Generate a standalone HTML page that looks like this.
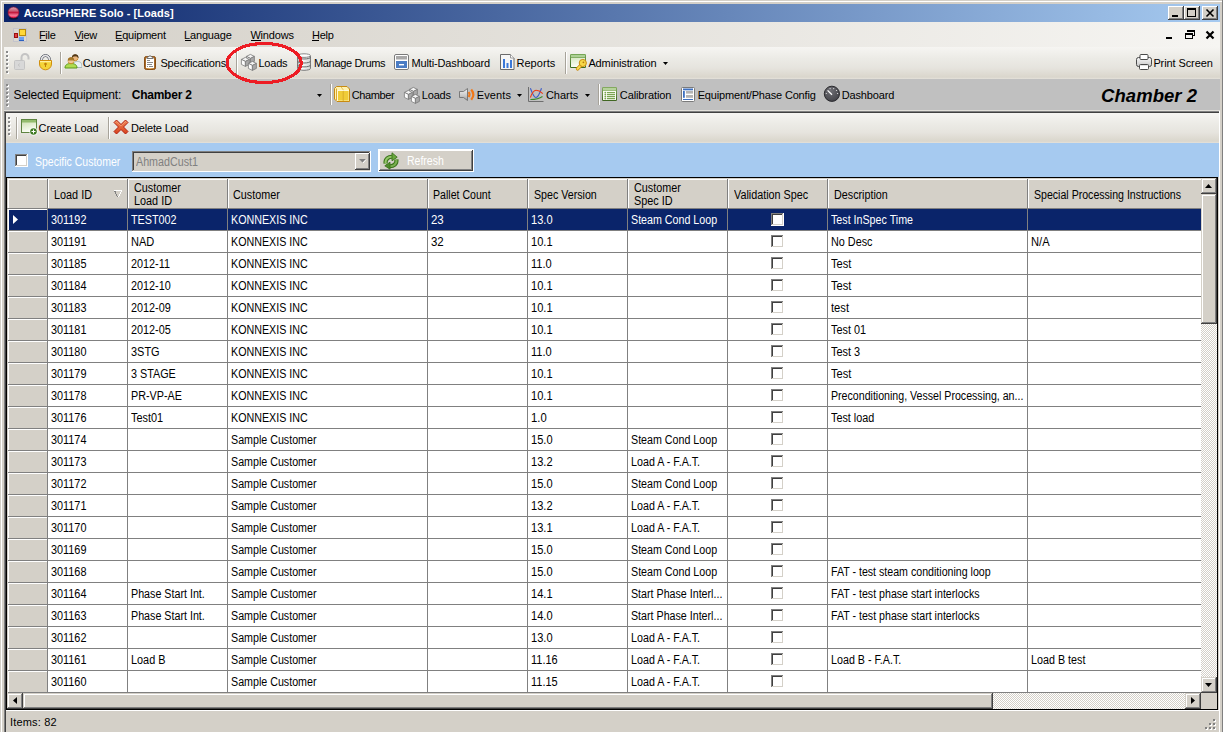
<!DOCTYPE html>
<html><head><meta charset="utf-8"><style>
html,body{margin:0;padding:0;width:1223px;height:732px;overflow:hidden;background:#d4d0c8}
.t{position:absolute;white-space:pre}
</style></head><body>
<div style="position:absolute;left:0px;top:0px;width:1223px;height:732px;background:#d4d0c8;"></div><div style="position:absolute;left:1px;top:1px;width:1221px;height:1px;background:#fff;"></div><div style="position:absolute;left:1px;top:1px;width:1px;height:731px;background:#fff;"></div><div style="position:absolute;left:1222px;top:0px;width:1px;height:732px;background:#808080;"></div><div style="position:absolute;left:4px;top:4px;width:1216px;height:18px;background:linear-gradient(90deg,#0a246a,#a6caf0);"></div><svg style="position:absolute;left:7px;top:6px" width="13" height="14"><defs><linearGradient id="tb" x1="0" y1="0" x2="0" y2="1"><stop offset="0" stop-color="#d8a4b4"/><stop offset=".35" stop-color="#c86078"/><stop offset=".5" stop-color="#c41c40"/><stop offset=".75" stop-color="#f27c98"/><stop offset=".92" stop-color="#ff3466"/><stop offset="1" stop-color="#c0103a"/></linearGradient></defs><ellipse cx="6.5" cy="12.3" rx="4.5" ry="1.2" fill="#000" opacity=".5"/><circle cx="6.5" cy="6.5" r="5.5" fill="url(#tb)" stroke="#900c2a" stroke-width=".6"/></svg><div style="position:absolute;left:1168px;top:6px;width:16px;height:14px;background:#d4d0c8;box-shadow:inset -1px -1px #404040,inset 1px 1px #fff,inset -2px -2px #808080"></div><svg style="position:absolute;left:1168px;top:6px" width="16" height="14"><rect x="4" y="9" width="6" height="2" fill="#000"/></svg><div style="position:absolute;left:1184px;top:6px;width:16px;height:14px;background:#d4d0c8;box-shadow:inset -1px -1px #404040,inset 1px 1px #fff,inset -2px -2px #808080"></div><svg style="position:absolute;left:1184px;top:6px" width="16" height="14"><g fill="#000"><rect x="3" y="2" width="9" height="2"/><rect x="3" y="2" width="1" height="9"/><rect x="11" y="2" width="1" height="9"/><rect x="3" y="10" width="9" height="1"/></g></svg><div style="position:absolute;left:1202px;top:6px;width:16px;height:14px;background:#d4d0c8;box-shadow:inset -1px -1px #404040,inset 1px 1px #fff,inset -2px -2px #808080"></div><svg style="position:absolute;left:1202px;top:6px" width="16" height="14"><path d="M4.5 3.5L11.5 10.5M11.5 3.5L4.5 10.5" stroke="#000" stroke-width="1.6"/></svg><div style="position:absolute;left:4px;top:22px;width:1216px;height:25px;background:linear-gradient(90deg,#d4d0c8,#f6f5f2);"></div><div style="position:absolute;left:40px;top:40px;width:6px;height:1px;background:#000;"></div><div style="position:absolute;left:75px;top:40px;width:8px;height:1px;background:#000;"></div><div style="position:absolute;left:116px;top:40px;width:7px;height:1px;background:#000;"></div><div style="position:absolute;left:185px;top:40px;width:6px;height:1px;background:#000;"></div><div style="position:absolute;left:251px;top:40px;width:10px;height:1px;background:#000;"></div><div style="position:absolute;left:312px;top:40px;width:7px;height:1px;background:#000;"></div><svg style="position:absolute;left:1160px;top:26px" width="60" height="18" shape-rendering="crispEdges"><g fill="#000"><rect x="6" y="11" width="6" height="2"/><rect x="27" y="4" width="8" height="2"/><rect x="34" y="4" width="1" height="6"/><rect x="32" y="9" width="3" height="1"/><rect x="25" y="7" width="8" height="2"/><rect x="25" y="7" width="1" height="6"/><rect x="32" y="7" width="1" height="6"/><rect x="25" y="12" width="8" height="1"/></g><path d="M46.5 5.5L53.5 12.5M53.5 5.5L46.5 12.5" stroke="#000" stroke-width="2.2" shape-rendering="geometricPrecision"/></svg><div style="position:absolute;left:4px;top:47px;width:1216px;height:32px;background:linear-gradient(180deg,#f6f5f2 0%,#ecebe6 35%,#e6e4de 65%,#dad6cc 94%,#e4e1da 100%);"></div><div style="position:absolute;left:7px;top:52px;width:2px;height:2px;background:#fff;"></div><div style="position:absolute;left:6px;top:51px;width:2px;height:2px;background:#8a8a8a;"></div><div style="position:absolute;left:7px;top:56px;width:2px;height:2px;background:#fff;"></div><div style="position:absolute;left:6px;top:55px;width:2px;height:2px;background:#8a8a8a;"></div><div style="position:absolute;left:7px;top:60px;width:2px;height:2px;background:#fff;"></div><div style="position:absolute;left:6px;top:59px;width:2px;height:2px;background:#8a8a8a;"></div><div style="position:absolute;left:7px;top:64px;width:2px;height:2px;background:#fff;"></div><div style="position:absolute;left:6px;top:63px;width:2px;height:2px;background:#8a8a8a;"></div><div style="position:absolute;left:7px;top:68px;width:2px;height:2px;background:#fff;"></div><div style="position:absolute;left:6px;top:67px;width:2px;height:2px;background:#8a8a8a;"></div><div style="position:absolute;left:7px;top:72px;width:2px;height:2px;background:#fff;"></div><div style="position:absolute;left:6px;top:71px;width:2px;height:2px;background:#8a8a8a;"></div><div style="position:absolute;left:60px;top:52px;width:1px;height:22px;background:#a7a39a;"></div><div style="position:absolute;left:61px;top:52px;width:1px;height:22px;background:#fff;"></div><div style="position:absolute;left:236px;top:52px;width:1px;height:22px;background:#a7a39a;"></div><div style="position:absolute;left:237px;top:52px;width:1px;height:22px;background:#fff;"></div><div style="position:absolute;left:565px;top:52px;width:1px;height:22px;background:#a7a39a;"></div><div style="position:absolute;left:566px;top:52px;width:1px;height:22px;background:#fff;"></div><svg style="position:absolute;left:660px;top:60px" width="10" height="6"><path d="M3 2h5l-2.5 3z" fill="#000"/></svg><div style="position:absolute;left:4px;top:79px;width:1216px;height:31px;background:#c0c0c0;"></div><div style="position:absolute;left:7px;top:85px;width:2px;height:2px;background:#fff;"></div><div style="position:absolute;left:6px;top:84px;width:2px;height:2px;background:#8a8a8a;"></div><div style="position:absolute;left:7px;top:89px;width:2px;height:2px;background:#fff;"></div><div style="position:absolute;left:6px;top:88px;width:2px;height:2px;background:#8a8a8a;"></div><div style="position:absolute;left:7px;top:93px;width:2px;height:2px;background:#fff;"></div><div style="position:absolute;left:6px;top:92px;width:2px;height:2px;background:#8a8a8a;"></div><div style="position:absolute;left:7px;top:97px;width:2px;height:2px;background:#fff;"></div><div style="position:absolute;left:6px;top:96px;width:2px;height:2px;background:#8a8a8a;"></div><div style="position:absolute;left:7px;top:101px;width:2px;height:2px;background:#fff;"></div><div style="position:absolute;left:6px;top:100px;width:2px;height:2px;background:#8a8a8a;"></div><div style="position:absolute;left:7px;top:105px;width:2px;height:2px;background:#fff;"></div><div style="position:absolute;left:6px;top:104px;width:2px;height:2px;background:#8a8a8a;"></div><svg style="position:absolute;left:314px;top:92px" width="10" height="6"><path d="M3 2h5l-2.5 3z" fill="#000"/></svg><div style="position:absolute;left:330px;top:84px;width:1px;height:21px;background:#a7a39a;"></div><div style="position:absolute;left:331px;top:84px;width:1px;height:21px;background:#fff;"></div><div style="position:absolute;left:598px;top:84px;width:1px;height:21px;background:#a7a39a;"></div><div style="position:absolute;left:599px;top:84px;width:1px;height:21px;background:#fff;"></div><svg style="position:absolute;left:514px;top:92px" width="10" height="6"><path d="M3 2h5l-2.5 3z" fill="#000"/></svg><svg style="position:absolute;left:582px;top:92px" width="10" height="6"><path d="M3 2h5l-2.5 3z" fill="#000"/></svg><div style="position:absolute;left:4px;top:110px;width:1216px;height:1px;background:#e2e0da;"></div><div style="position:absolute;left:4px;top:111px;width:1215px;height:1px;background:#808080;"></div><div style="position:absolute;left:4px;top:112px;width:1215px;height:1px;background:#404040;"></div><div style="position:absolute;left:4px;top:111px;width:1px;height:621px;background:#808080;"></div><div style="position:absolute;left:5px;top:112px;width:1px;height:620px;background:#404040;"></div><div style="position:absolute;left:1219px;top:111px;width:1px;height:621px;background:#fff;"></div><div style="position:absolute;left:6px;top:113px;width:1213px;height:30px;background:linear-gradient(180deg,#f6f5f2 0%,#ecebe6 35%,#e6e4de 65%,#dad6cc 94%,#e4e1da 100%);"></div><div style="position:absolute;left:9px;top:118px;width:2px;height:2px;background:#fff;"></div><div style="position:absolute;left:8px;top:117px;width:2px;height:2px;background:#8a8a8a;"></div><div style="position:absolute;left:9px;top:122px;width:2px;height:2px;background:#fff;"></div><div style="position:absolute;left:8px;top:121px;width:2px;height:2px;background:#8a8a8a;"></div><div style="position:absolute;left:9px;top:126px;width:2px;height:2px;background:#fff;"></div><div style="position:absolute;left:8px;top:125px;width:2px;height:2px;background:#8a8a8a;"></div><div style="position:absolute;left:9px;top:130px;width:2px;height:2px;background:#fff;"></div><div style="position:absolute;left:8px;top:129px;width:2px;height:2px;background:#8a8a8a;"></div><div style="position:absolute;left:9px;top:134px;width:2px;height:2px;background:#fff;"></div><div style="position:absolute;left:8px;top:133px;width:2px;height:2px;background:#8a8a8a;"></div><div style="position:absolute;left:16px;top:117px;width:1px;height:22px;background:#a7a39a;"></div><div style="position:absolute;left:17px;top:117px;width:1px;height:22px;background:#fff;"></div><div style="position:absolute;left:108px;top:117px;width:1px;height:22px;background:#a7a39a;"></div><div style="position:absolute;left:109px;top:117px;width:1px;height:22px;background:#fff;"></div><div style="position:absolute;left:6px;top:143px;width:1213px;height:34px;background:#a6caf0;"></div><svg style="position:absolute;left:15px;top:154px" width="13" height="13" shape-rendering="crispEdges"><rect width="13" height="13" fill="#fff"/><path d="M0 0.5H12M0.5 0V12" stroke="#808080"/><path d="M1 1.5H11M1.5 1V11" stroke="#404040"/><path d="M12.5 0V13M0 12.5H13" stroke="#fff"/><path d="M11.5 1V12M1 11.5H12" stroke="#d4d0c8"/></svg><svg style="position:absolute;left:132px;top:151px" width="239" height="21" shape-rendering="crispEdges"><rect width="239" height="21" fill="#d4d0c8"/><path d="M0 0.5H238M0.5 0V20" stroke="#808080"/><path d="M1 1.5H237M1.5 1V19" stroke="#404040"/><path d="M238.5 0V21M0 20.5H239" stroke="#fff"/><g transform="translate(223 2)"><rect width="15" height="17" fill="#d4d0c8"/><path d="M0 0.5H14M0.5 0V16" stroke="#fff"/><path d="M14.5 0V17M0 16.5H15" stroke="#404040"/><path d="M13.5 1V16M1 15.5H14" stroke="#808080"/><path d="M4 6h7l-3.5 3.5z" fill="#808080" shape-rendering="geometricPrecision"/><path d="M11 6.5L8 10" stroke="#fff" stroke-width="1" shape-rendering="geometricPrecision"/></g></svg><svg style="position:absolute;left:378px;top:149px" width="96" height="23" shape-rendering="crispEdges"><rect width="96" height="23" fill="#fff"/><rect x="1" y="1" width="94" height="21" fill="#d4d0c8"/><path d="M1 1.5H94M1.5 1V21" stroke="#fff"/><path d="M94.5 1V22M1 21.5H95" stroke="#404040"/><path d="M93.5 2V21M2 20.5H94" stroke="#808080"/></svg><div style="position:absolute;left:6px;top:177px;width:1212px;height:533px;background:#000;"></div><div style="position:absolute;left:7px;top:178px;width:1210px;height:531px;background:#fff;"></div><div style="position:absolute;left:7px;top:178px;width:1194px;height:31px;background:#d4d0c8;"></div><div style="position:absolute;left:8px;top:179px;width:1193px;height:1px;background:#fff;"></div><div style="position:absolute;left:7px;top:208px;width:1194px;height:1px;background:#808080;"></div><div style="position:absolute;left:47px;top:179px;width:1px;height:29px;background:#808080;"></div><div style="position:absolute;left:48px;top:179px;width:1px;height:29px;background:#fff;"></div><div style="position:absolute;left:127px;top:179px;width:1px;height:29px;background:#808080;"></div><div style="position:absolute;left:128px;top:179px;width:1px;height:29px;background:#fff;"></div><div style="position:absolute;left:227px;top:179px;width:1px;height:29px;background:#808080;"></div><div style="position:absolute;left:228px;top:179px;width:1px;height:29px;background:#fff;"></div><div style="position:absolute;left:427px;top:179px;width:1px;height:29px;background:#808080;"></div><div style="position:absolute;left:428px;top:179px;width:1px;height:29px;background:#fff;"></div><div style="position:absolute;left:527px;top:179px;width:1px;height:29px;background:#808080;"></div><div style="position:absolute;left:528px;top:179px;width:1px;height:29px;background:#fff;"></div><div style="position:absolute;left:627px;top:179px;width:1px;height:29px;background:#808080;"></div><div style="position:absolute;left:628px;top:179px;width:1px;height:29px;background:#fff;"></div><div style="position:absolute;left:727px;top:179px;width:1px;height:29px;background:#808080;"></div><div style="position:absolute;left:728px;top:179px;width:1px;height:29px;background:#fff;"></div><div style="position:absolute;left:827px;top:179px;width:1px;height:29px;background:#808080;"></div><div style="position:absolute;left:828px;top:179px;width:1px;height:29px;background:#fff;"></div><div style="position:absolute;left:1027px;top:179px;width:1px;height:29px;background:#808080;"></div><div style="position:absolute;left:1028px;top:179px;width:1px;height:29px;background:#fff;"></div><div style="position:absolute;left:8px;top:179px;width:1px;height:29px;background:#fff;"></div><svg style="position:absolute;left:112px;top:188px" width="12" height="12" shape-rendering="crispEdges"><rect x="2" y="2" width="8" height="1" fill="#fff"/><rect x="2" y="3" width="2" height="1" fill="#808080"/><rect x="3" y="4" width="1" height="2" fill="#808080"/><rect x="4" y="6" width="1" height="2" fill="#808080"/><rect x="5" y="8" width="1" height="1" fill="#808080"/><rect x="9" y="3" width="1" height="1" fill="#fff"/><rect x="8" y="4" width="1" height="2" fill="#fff"/><rect x="7" y="6" width="1" height="2" fill="#fff"/><rect x="6" y="8" width="1" height="1" fill="#fff"/></svg><div style="position:absolute;left:7px;top:209px;width:40px;height:22px;background:#d4d0c8;"></div><div style="position:absolute;left:8px;top:209px;width:39px;height:1px;background:#fff;"></div><div style="position:absolute;left:8px;top:209px;width:1px;height:21px;background:#fff;"></div><div style="position:absolute;left:8px;top:230px;width:39px;height:1px;background:#808080;"></div><div style="position:absolute;left:9px;top:210px;width:38px;height:20px;background:#0a246a;"></div><svg style="position:absolute;left:12px;top:215px" width="8" height="10"><path d="M1 0v9l5-4.5z" fill="#fff"/></svg><div style="position:absolute;left:48px;top:209px;width:1153px;height:21px;background:#0a246a;"></div><div style="position:absolute;left:48px;top:230px;width:1153px;height:1px;background:#808080;"></div><div style="position:absolute;left:47px;top:209px;width:1px;height:22px;background:#808080;"></div><div style="position:absolute;left:127px;top:209px;width:1px;height:22px;background:#808080;"></div><div style="position:absolute;left:227px;top:209px;width:1px;height:22px;background:#808080;"></div><div style="position:absolute;left:427px;top:209px;width:1px;height:22px;background:#808080;"></div><div style="position:absolute;left:527px;top:209px;width:1px;height:22px;background:#808080;"></div><div style="position:absolute;left:627px;top:209px;width:1px;height:22px;background:#808080;"></div><div style="position:absolute;left:727px;top:209px;width:1px;height:22px;background:#808080;"></div><div style="position:absolute;left:827px;top:209px;width:1px;height:22px;background:#808080;"></div><div style="position:absolute;left:1027px;top:209px;width:1px;height:22px;background:#808080;"></div><svg style="position:absolute;left:771px;top:213px" width="13" height="13" shape-rendering="crispEdges"><rect width="13" height="13" fill="#fff"/><path d="M0 0.5H12M0.5 0V12" stroke="#808080"/><path d="M1 1.5H11M1.5 1V11" stroke="#404040"/><path d="M12.5 0V13M0 12.5H13" stroke="#fff"/><path d="M11.5 1V12M1 11.5H12" stroke="#d4d0c8"/></svg><div style="position:absolute;left:7px;top:231px;width:40px;height:22px;background:#d4d0c8;"></div><div style="position:absolute;left:8px;top:231px;width:39px;height:1px;background:#fff;"></div><div style="position:absolute;left:8px;top:231px;width:1px;height:21px;background:#fff;"></div><div style="position:absolute;left:8px;top:252px;width:39px;height:1px;background:#808080;"></div><div style="position:absolute;left:48px;top:231px;width:1153px;height:21px;background:#fff;"></div><div style="position:absolute;left:48px;top:252px;width:1153px;height:1px;background:#808080;"></div><div style="position:absolute;left:47px;top:231px;width:1px;height:22px;background:#808080;"></div><div style="position:absolute;left:127px;top:231px;width:1px;height:22px;background:#808080;"></div><div style="position:absolute;left:227px;top:231px;width:1px;height:22px;background:#808080;"></div><div style="position:absolute;left:427px;top:231px;width:1px;height:22px;background:#808080;"></div><div style="position:absolute;left:527px;top:231px;width:1px;height:22px;background:#808080;"></div><div style="position:absolute;left:627px;top:231px;width:1px;height:22px;background:#808080;"></div><div style="position:absolute;left:727px;top:231px;width:1px;height:22px;background:#808080;"></div><div style="position:absolute;left:827px;top:231px;width:1px;height:22px;background:#808080;"></div><div style="position:absolute;left:1027px;top:231px;width:1px;height:22px;background:#808080;"></div><svg style="position:absolute;left:771px;top:235px" width="13" height="13" shape-rendering="crispEdges"><rect width="13" height="13" fill="#fff"/><path d="M0 0.5H12M0.5 0V12" stroke="#808080"/><path d="M1 1.5H11M1.5 1V11" stroke="#404040"/><path d="M12.5 0V13M0 12.5H13" stroke="#fff"/><path d="M11.5 1V12M1 11.5H12" stroke="#d4d0c8"/></svg><div style="position:absolute;left:7px;top:253px;width:40px;height:22px;background:#d4d0c8;"></div><div style="position:absolute;left:8px;top:253px;width:39px;height:1px;background:#fff;"></div><div style="position:absolute;left:8px;top:253px;width:1px;height:21px;background:#fff;"></div><div style="position:absolute;left:8px;top:274px;width:39px;height:1px;background:#808080;"></div><div style="position:absolute;left:48px;top:253px;width:1153px;height:21px;background:#fff;"></div><div style="position:absolute;left:48px;top:274px;width:1153px;height:1px;background:#808080;"></div><div style="position:absolute;left:47px;top:253px;width:1px;height:22px;background:#808080;"></div><div style="position:absolute;left:127px;top:253px;width:1px;height:22px;background:#808080;"></div><div style="position:absolute;left:227px;top:253px;width:1px;height:22px;background:#808080;"></div><div style="position:absolute;left:427px;top:253px;width:1px;height:22px;background:#808080;"></div><div style="position:absolute;left:527px;top:253px;width:1px;height:22px;background:#808080;"></div><div style="position:absolute;left:627px;top:253px;width:1px;height:22px;background:#808080;"></div><div style="position:absolute;left:727px;top:253px;width:1px;height:22px;background:#808080;"></div><div style="position:absolute;left:827px;top:253px;width:1px;height:22px;background:#808080;"></div><div style="position:absolute;left:1027px;top:253px;width:1px;height:22px;background:#808080;"></div><svg style="position:absolute;left:771px;top:257px" width="13" height="13" shape-rendering="crispEdges"><rect width="13" height="13" fill="#fff"/><path d="M0 0.5H12M0.5 0V12" stroke="#808080"/><path d="M1 1.5H11M1.5 1V11" stroke="#404040"/><path d="M12.5 0V13M0 12.5H13" stroke="#fff"/><path d="M11.5 1V12M1 11.5H12" stroke="#d4d0c8"/></svg><div style="position:absolute;left:7px;top:275px;width:40px;height:22px;background:#d4d0c8;"></div><div style="position:absolute;left:8px;top:275px;width:39px;height:1px;background:#fff;"></div><div style="position:absolute;left:8px;top:275px;width:1px;height:21px;background:#fff;"></div><div style="position:absolute;left:8px;top:296px;width:39px;height:1px;background:#808080;"></div><div style="position:absolute;left:48px;top:275px;width:1153px;height:21px;background:#fff;"></div><div style="position:absolute;left:48px;top:296px;width:1153px;height:1px;background:#808080;"></div><div style="position:absolute;left:47px;top:275px;width:1px;height:22px;background:#808080;"></div><div style="position:absolute;left:127px;top:275px;width:1px;height:22px;background:#808080;"></div><div style="position:absolute;left:227px;top:275px;width:1px;height:22px;background:#808080;"></div><div style="position:absolute;left:427px;top:275px;width:1px;height:22px;background:#808080;"></div><div style="position:absolute;left:527px;top:275px;width:1px;height:22px;background:#808080;"></div><div style="position:absolute;left:627px;top:275px;width:1px;height:22px;background:#808080;"></div><div style="position:absolute;left:727px;top:275px;width:1px;height:22px;background:#808080;"></div><div style="position:absolute;left:827px;top:275px;width:1px;height:22px;background:#808080;"></div><div style="position:absolute;left:1027px;top:275px;width:1px;height:22px;background:#808080;"></div><svg style="position:absolute;left:771px;top:279px" width="13" height="13" shape-rendering="crispEdges"><rect width="13" height="13" fill="#fff"/><path d="M0 0.5H12M0.5 0V12" stroke="#808080"/><path d="M1 1.5H11M1.5 1V11" stroke="#404040"/><path d="M12.5 0V13M0 12.5H13" stroke="#fff"/><path d="M11.5 1V12M1 11.5H12" stroke="#d4d0c8"/></svg><div style="position:absolute;left:7px;top:297px;width:40px;height:22px;background:#d4d0c8;"></div><div style="position:absolute;left:8px;top:297px;width:39px;height:1px;background:#fff;"></div><div style="position:absolute;left:8px;top:297px;width:1px;height:21px;background:#fff;"></div><div style="position:absolute;left:8px;top:318px;width:39px;height:1px;background:#808080;"></div><div style="position:absolute;left:48px;top:297px;width:1153px;height:21px;background:#fff;"></div><div style="position:absolute;left:48px;top:318px;width:1153px;height:1px;background:#808080;"></div><div style="position:absolute;left:47px;top:297px;width:1px;height:22px;background:#808080;"></div><div style="position:absolute;left:127px;top:297px;width:1px;height:22px;background:#808080;"></div><div style="position:absolute;left:227px;top:297px;width:1px;height:22px;background:#808080;"></div><div style="position:absolute;left:427px;top:297px;width:1px;height:22px;background:#808080;"></div><div style="position:absolute;left:527px;top:297px;width:1px;height:22px;background:#808080;"></div><div style="position:absolute;left:627px;top:297px;width:1px;height:22px;background:#808080;"></div><div style="position:absolute;left:727px;top:297px;width:1px;height:22px;background:#808080;"></div><div style="position:absolute;left:827px;top:297px;width:1px;height:22px;background:#808080;"></div><div style="position:absolute;left:1027px;top:297px;width:1px;height:22px;background:#808080;"></div><svg style="position:absolute;left:771px;top:301px" width="13" height="13" shape-rendering="crispEdges"><rect width="13" height="13" fill="#fff"/><path d="M0 0.5H12M0.5 0V12" stroke="#808080"/><path d="M1 1.5H11M1.5 1V11" stroke="#404040"/><path d="M12.5 0V13M0 12.5H13" stroke="#fff"/><path d="M11.5 1V12M1 11.5H12" stroke="#d4d0c8"/></svg><div style="position:absolute;left:7px;top:319px;width:40px;height:22px;background:#d4d0c8;"></div><div style="position:absolute;left:8px;top:319px;width:39px;height:1px;background:#fff;"></div><div style="position:absolute;left:8px;top:319px;width:1px;height:21px;background:#fff;"></div><div style="position:absolute;left:8px;top:340px;width:39px;height:1px;background:#808080;"></div><div style="position:absolute;left:48px;top:319px;width:1153px;height:21px;background:#fff;"></div><div style="position:absolute;left:48px;top:340px;width:1153px;height:1px;background:#808080;"></div><div style="position:absolute;left:47px;top:319px;width:1px;height:22px;background:#808080;"></div><div style="position:absolute;left:127px;top:319px;width:1px;height:22px;background:#808080;"></div><div style="position:absolute;left:227px;top:319px;width:1px;height:22px;background:#808080;"></div><div style="position:absolute;left:427px;top:319px;width:1px;height:22px;background:#808080;"></div><div style="position:absolute;left:527px;top:319px;width:1px;height:22px;background:#808080;"></div><div style="position:absolute;left:627px;top:319px;width:1px;height:22px;background:#808080;"></div><div style="position:absolute;left:727px;top:319px;width:1px;height:22px;background:#808080;"></div><div style="position:absolute;left:827px;top:319px;width:1px;height:22px;background:#808080;"></div><div style="position:absolute;left:1027px;top:319px;width:1px;height:22px;background:#808080;"></div><svg style="position:absolute;left:771px;top:323px" width="13" height="13" shape-rendering="crispEdges"><rect width="13" height="13" fill="#fff"/><path d="M0 0.5H12M0.5 0V12" stroke="#808080"/><path d="M1 1.5H11M1.5 1V11" stroke="#404040"/><path d="M12.5 0V13M0 12.5H13" stroke="#fff"/><path d="M11.5 1V12M1 11.5H12" stroke="#d4d0c8"/></svg><div style="position:absolute;left:7px;top:341px;width:40px;height:22px;background:#d4d0c8;"></div><div style="position:absolute;left:8px;top:341px;width:39px;height:1px;background:#fff;"></div><div style="position:absolute;left:8px;top:341px;width:1px;height:21px;background:#fff;"></div><div style="position:absolute;left:8px;top:362px;width:39px;height:1px;background:#808080;"></div><div style="position:absolute;left:48px;top:341px;width:1153px;height:21px;background:#fff;"></div><div style="position:absolute;left:48px;top:362px;width:1153px;height:1px;background:#808080;"></div><div style="position:absolute;left:47px;top:341px;width:1px;height:22px;background:#808080;"></div><div style="position:absolute;left:127px;top:341px;width:1px;height:22px;background:#808080;"></div><div style="position:absolute;left:227px;top:341px;width:1px;height:22px;background:#808080;"></div><div style="position:absolute;left:427px;top:341px;width:1px;height:22px;background:#808080;"></div><div style="position:absolute;left:527px;top:341px;width:1px;height:22px;background:#808080;"></div><div style="position:absolute;left:627px;top:341px;width:1px;height:22px;background:#808080;"></div><div style="position:absolute;left:727px;top:341px;width:1px;height:22px;background:#808080;"></div><div style="position:absolute;left:827px;top:341px;width:1px;height:22px;background:#808080;"></div><div style="position:absolute;left:1027px;top:341px;width:1px;height:22px;background:#808080;"></div><svg style="position:absolute;left:771px;top:345px" width="13" height="13" shape-rendering="crispEdges"><rect width="13" height="13" fill="#fff"/><path d="M0 0.5H12M0.5 0V12" stroke="#808080"/><path d="M1 1.5H11M1.5 1V11" stroke="#404040"/><path d="M12.5 0V13M0 12.5H13" stroke="#fff"/><path d="M11.5 1V12M1 11.5H12" stroke="#d4d0c8"/></svg><div style="position:absolute;left:7px;top:363px;width:40px;height:22px;background:#d4d0c8;"></div><div style="position:absolute;left:8px;top:363px;width:39px;height:1px;background:#fff;"></div><div style="position:absolute;left:8px;top:363px;width:1px;height:21px;background:#fff;"></div><div style="position:absolute;left:8px;top:384px;width:39px;height:1px;background:#808080;"></div><div style="position:absolute;left:48px;top:363px;width:1153px;height:21px;background:#fff;"></div><div style="position:absolute;left:48px;top:384px;width:1153px;height:1px;background:#808080;"></div><div style="position:absolute;left:47px;top:363px;width:1px;height:22px;background:#808080;"></div><div style="position:absolute;left:127px;top:363px;width:1px;height:22px;background:#808080;"></div><div style="position:absolute;left:227px;top:363px;width:1px;height:22px;background:#808080;"></div><div style="position:absolute;left:427px;top:363px;width:1px;height:22px;background:#808080;"></div><div style="position:absolute;left:527px;top:363px;width:1px;height:22px;background:#808080;"></div><div style="position:absolute;left:627px;top:363px;width:1px;height:22px;background:#808080;"></div><div style="position:absolute;left:727px;top:363px;width:1px;height:22px;background:#808080;"></div><div style="position:absolute;left:827px;top:363px;width:1px;height:22px;background:#808080;"></div><div style="position:absolute;left:1027px;top:363px;width:1px;height:22px;background:#808080;"></div><svg style="position:absolute;left:771px;top:367px" width="13" height="13" shape-rendering="crispEdges"><rect width="13" height="13" fill="#fff"/><path d="M0 0.5H12M0.5 0V12" stroke="#808080"/><path d="M1 1.5H11M1.5 1V11" stroke="#404040"/><path d="M12.5 0V13M0 12.5H13" stroke="#fff"/><path d="M11.5 1V12M1 11.5H12" stroke="#d4d0c8"/></svg><div style="position:absolute;left:7px;top:385px;width:40px;height:22px;background:#d4d0c8;"></div><div style="position:absolute;left:8px;top:385px;width:39px;height:1px;background:#fff;"></div><div style="position:absolute;left:8px;top:385px;width:1px;height:21px;background:#fff;"></div><div style="position:absolute;left:8px;top:406px;width:39px;height:1px;background:#808080;"></div><div style="position:absolute;left:48px;top:385px;width:1153px;height:21px;background:#fff;"></div><div style="position:absolute;left:48px;top:406px;width:1153px;height:1px;background:#808080;"></div><div style="position:absolute;left:47px;top:385px;width:1px;height:22px;background:#808080;"></div><div style="position:absolute;left:127px;top:385px;width:1px;height:22px;background:#808080;"></div><div style="position:absolute;left:227px;top:385px;width:1px;height:22px;background:#808080;"></div><div style="position:absolute;left:427px;top:385px;width:1px;height:22px;background:#808080;"></div><div style="position:absolute;left:527px;top:385px;width:1px;height:22px;background:#808080;"></div><div style="position:absolute;left:627px;top:385px;width:1px;height:22px;background:#808080;"></div><div style="position:absolute;left:727px;top:385px;width:1px;height:22px;background:#808080;"></div><div style="position:absolute;left:827px;top:385px;width:1px;height:22px;background:#808080;"></div><div style="position:absolute;left:1027px;top:385px;width:1px;height:22px;background:#808080;"></div><svg style="position:absolute;left:771px;top:389px" width="13" height="13" shape-rendering="crispEdges"><rect width="13" height="13" fill="#fff"/><path d="M0 0.5H12M0.5 0V12" stroke="#808080"/><path d="M1 1.5H11M1.5 1V11" stroke="#404040"/><path d="M12.5 0V13M0 12.5H13" stroke="#fff"/><path d="M11.5 1V12M1 11.5H12" stroke="#d4d0c8"/></svg><div style="position:absolute;left:7px;top:407px;width:40px;height:22px;background:#d4d0c8;"></div><div style="position:absolute;left:8px;top:407px;width:39px;height:1px;background:#fff;"></div><div style="position:absolute;left:8px;top:407px;width:1px;height:21px;background:#fff;"></div><div style="position:absolute;left:8px;top:428px;width:39px;height:1px;background:#808080;"></div><div style="position:absolute;left:48px;top:407px;width:1153px;height:21px;background:#fff;"></div><div style="position:absolute;left:48px;top:428px;width:1153px;height:1px;background:#808080;"></div><div style="position:absolute;left:47px;top:407px;width:1px;height:22px;background:#808080;"></div><div style="position:absolute;left:127px;top:407px;width:1px;height:22px;background:#808080;"></div><div style="position:absolute;left:227px;top:407px;width:1px;height:22px;background:#808080;"></div><div style="position:absolute;left:427px;top:407px;width:1px;height:22px;background:#808080;"></div><div style="position:absolute;left:527px;top:407px;width:1px;height:22px;background:#808080;"></div><div style="position:absolute;left:627px;top:407px;width:1px;height:22px;background:#808080;"></div><div style="position:absolute;left:727px;top:407px;width:1px;height:22px;background:#808080;"></div><div style="position:absolute;left:827px;top:407px;width:1px;height:22px;background:#808080;"></div><div style="position:absolute;left:1027px;top:407px;width:1px;height:22px;background:#808080;"></div><svg style="position:absolute;left:771px;top:411px" width="13" height="13" shape-rendering="crispEdges"><rect width="13" height="13" fill="#fff"/><path d="M0 0.5H12M0.5 0V12" stroke="#808080"/><path d="M1 1.5H11M1.5 1V11" stroke="#404040"/><path d="M12.5 0V13M0 12.5H13" stroke="#fff"/><path d="M11.5 1V12M1 11.5H12" stroke="#d4d0c8"/></svg><div style="position:absolute;left:7px;top:429px;width:40px;height:22px;background:#d4d0c8;"></div><div style="position:absolute;left:8px;top:429px;width:39px;height:1px;background:#fff;"></div><div style="position:absolute;left:8px;top:429px;width:1px;height:21px;background:#fff;"></div><div style="position:absolute;left:8px;top:450px;width:39px;height:1px;background:#808080;"></div><div style="position:absolute;left:48px;top:429px;width:1153px;height:21px;background:#fff;"></div><div style="position:absolute;left:48px;top:450px;width:1153px;height:1px;background:#808080;"></div><div style="position:absolute;left:47px;top:429px;width:1px;height:22px;background:#808080;"></div><div style="position:absolute;left:127px;top:429px;width:1px;height:22px;background:#808080;"></div><div style="position:absolute;left:227px;top:429px;width:1px;height:22px;background:#808080;"></div><div style="position:absolute;left:427px;top:429px;width:1px;height:22px;background:#808080;"></div><div style="position:absolute;left:527px;top:429px;width:1px;height:22px;background:#808080;"></div><div style="position:absolute;left:627px;top:429px;width:1px;height:22px;background:#808080;"></div><div style="position:absolute;left:727px;top:429px;width:1px;height:22px;background:#808080;"></div><div style="position:absolute;left:827px;top:429px;width:1px;height:22px;background:#808080;"></div><div style="position:absolute;left:1027px;top:429px;width:1px;height:22px;background:#808080;"></div><svg style="position:absolute;left:771px;top:433px" width="13" height="13" shape-rendering="crispEdges"><rect width="13" height="13" fill="#fff"/><path d="M0 0.5H12M0.5 0V12" stroke="#808080"/><path d="M1 1.5H11M1.5 1V11" stroke="#404040"/><path d="M12.5 0V13M0 12.5H13" stroke="#fff"/><path d="M11.5 1V12M1 11.5H12" stroke="#d4d0c8"/></svg><div style="position:absolute;left:7px;top:451px;width:40px;height:22px;background:#d4d0c8;"></div><div style="position:absolute;left:8px;top:451px;width:39px;height:1px;background:#fff;"></div><div style="position:absolute;left:8px;top:451px;width:1px;height:21px;background:#fff;"></div><div style="position:absolute;left:8px;top:472px;width:39px;height:1px;background:#808080;"></div><div style="position:absolute;left:48px;top:451px;width:1153px;height:21px;background:#fff;"></div><div style="position:absolute;left:48px;top:472px;width:1153px;height:1px;background:#808080;"></div><div style="position:absolute;left:47px;top:451px;width:1px;height:22px;background:#808080;"></div><div style="position:absolute;left:127px;top:451px;width:1px;height:22px;background:#808080;"></div><div style="position:absolute;left:227px;top:451px;width:1px;height:22px;background:#808080;"></div><div style="position:absolute;left:427px;top:451px;width:1px;height:22px;background:#808080;"></div><div style="position:absolute;left:527px;top:451px;width:1px;height:22px;background:#808080;"></div><div style="position:absolute;left:627px;top:451px;width:1px;height:22px;background:#808080;"></div><div style="position:absolute;left:727px;top:451px;width:1px;height:22px;background:#808080;"></div><div style="position:absolute;left:827px;top:451px;width:1px;height:22px;background:#808080;"></div><div style="position:absolute;left:1027px;top:451px;width:1px;height:22px;background:#808080;"></div><svg style="position:absolute;left:771px;top:455px" width="13" height="13" shape-rendering="crispEdges"><rect width="13" height="13" fill="#fff"/><path d="M0 0.5H12M0.5 0V12" stroke="#808080"/><path d="M1 1.5H11M1.5 1V11" stroke="#404040"/><path d="M12.5 0V13M0 12.5H13" stroke="#fff"/><path d="M11.5 1V12M1 11.5H12" stroke="#d4d0c8"/></svg><div style="position:absolute;left:7px;top:473px;width:40px;height:22px;background:#d4d0c8;"></div><div style="position:absolute;left:8px;top:473px;width:39px;height:1px;background:#fff;"></div><div style="position:absolute;left:8px;top:473px;width:1px;height:21px;background:#fff;"></div><div style="position:absolute;left:8px;top:494px;width:39px;height:1px;background:#808080;"></div><div style="position:absolute;left:48px;top:473px;width:1153px;height:21px;background:#fff;"></div><div style="position:absolute;left:48px;top:494px;width:1153px;height:1px;background:#808080;"></div><div style="position:absolute;left:47px;top:473px;width:1px;height:22px;background:#808080;"></div><div style="position:absolute;left:127px;top:473px;width:1px;height:22px;background:#808080;"></div><div style="position:absolute;left:227px;top:473px;width:1px;height:22px;background:#808080;"></div><div style="position:absolute;left:427px;top:473px;width:1px;height:22px;background:#808080;"></div><div style="position:absolute;left:527px;top:473px;width:1px;height:22px;background:#808080;"></div><div style="position:absolute;left:627px;top:473px;width:1px;height:22px;background:#808080;"></div><div style="position:absolute;left:727px;top:473px;width:1px;height:22px;background:#808080;"></div><div style="position:absolute;left:827px;top:473px;width:1px;height:22px;background:#808080;"></div><div style="position:absolute;left:1027px;top:473px;width:1px;height:22px;background:#808080;"></div><svg style="position:absolute;left:771px;top:477px" width="13" height="13" shape-rendering="crispEdges"><rect width="13" height="13" fill="#fff"/><path d="M0 0.5H12M0.5 0V12" stroke="#808080"/><path d="M1 1.5H11M1.5 1V11" stroke="#404040"/><path d="M12.5 0V13M0 12.5H13" stroke="#fff"/><path d="M11.5 1V12M1 11.5H12" stroke="#d4d0c8"/></svg><div style="position:absolute;left:7px;top:495px;width:40px;height:22px;background:#d4d0c8;"></div><div style="position:absolute;left:8px;top:495px;width:39px;height:1px;background:#fff;"></div><div style="position:absolute;left:8px;top:495px;width:1px;height:21px;background:#fff;"></div><div style="position:absolute;left:8px;top:516px;width:39px;height:1px;background:#808080;"></div><div style="position:absolute;left:48px;top:495px;width:1153px;height:21px;background:#fff;"></div><div style="position:absolute;left:48px;top:516px;width:1153px;height:1px;background:#808080;"></div><div style="position:absolute;left:47px;top:495px;width:1px;height:22px;background:#808080;"></div><div style="position:absolute;left:127px;top:495px;width:1px;height:22px;background:#808080;"></div><div style="position:absolute;left:227px;top:495px;width:1px;height:22px;background:#808080;"></div><div style="position:absolute;left:427px;top:495px;width:1px;height:22px;background:#808080;"></div><div style="position:absolute;left:527px;top:495px;width:1px;height:22px;background:#808080;"></div><div style="position:absolute;left:627px;top:495px;width:1px;height:22px;background:#808080;"></div><div style="position:absolute;left:727px;top:495px;width:1px;height:22px;background:#808080;"></div><div style="position:absolute;left:827px;top:495px;width:1px;height:22px;background:#808080;"></div><div style="position:absolute;left:1027px;top:495px;width:1px;height:22px;background:#808080;"></div><svg style="position:absolute;left:771px;top:499px" width="13" height="13" shape-rendering="crispEdges"><rect width="13" height="13" fill="#fff"/><path d="M0 0.5H12M0.5 0V12" stroke="#808080"/><path d="M1 1.5H11M1.5 1V11" stroke="#404040"/><path d="M12.5 0V13M0 12.5H13" stroke="#fff"/><path d="M11.5 1V12M1 11.5H12" stroke="#d4d0c8"/></svg><div style="position:absolute;left:7px;top:517px;width:40px;height:22px;background:#d4d0c8;"></div><div style="position:absolute;left:8px;top:517px;width:39px;height:1px;background:#fff;"></div><div style="position:absolute;left:8px;top:517px;width:1px;height:21px;background:#fff;"></div><div style="position:absolute;left:8px;top:538px;width:39px;height:1px;background:#808080;"></div><div style="position:absolute;left:48px;top:517px;width:1153px;height:21px;background:#fff;"></div><div style="position:absolute;left:48px;top:538px;width:1153px;height:1px;background:#808080;"></div><div style="position:absolute;left:47px;top:517px;width:1px;height:22px;background:#808080;"></div><div style="position:absolute;left:127px;top:517px;width:1px;height:22px;background:#808080;"></div><div style="position:absolute;left:227px;top:517px;width:1px;height:22px;background:#808080;"></div><div style="position:absolute;left:427px;top:517px;width:1px;height:22px;background:#808080;"></div><div style="position:absolute;left:527px;top:517px;width:1px;height:22px;background:#808080;"></div><div style="position:absolute;left:627px;top:517px;width:1px;height:22px;background:#808080;"></div><div style="position:absolute;left:727px;top:517px;width:1px;height:22px;background:#808080;"></div><div style="position:absolute;left:827px;top:517px;width:1px;height:22px;background:#808080;"></div><div style="position:absolute;left:1027px;top:517px;width:1px;height:22px;background:#808080;"></div><svg style="position:absolute;left:771px;top:521px" width="13" height="13" shape-rendering="crispEdges"><rect width="13" height="13" fill="#fff"/><path d="M0 0.5H12M0.5 0V12" stroke="#808080"/><path d="M1 1.5H11M1.5 1V11" stroke="#404040"/><path d="M12.5 0V13M0 12.5H13" stroke="#fff"/><path d="M11.5 1V12M1 11.5H12" stroke="#d4d0c8"/></svg><div style="position:absolute;left:7px;top:539px;width:40px;height:22px;background:#d4d0c8;"></div><div style="position:absolute;left:8px;top:539px;width:39px;height:1px;background:#fff;"></div><div style="position:absolute;left:8px;top:539px;width:1px;height:21px;background:#fff;"></div><div style="position:absolute;left:8px;top:560px;width:39px;height:1px;background:#808080;"></div><div style="position:absolute;left:48px;top:539px;width:1153px;height:21px;background:#fff;"></div><div style="position:absolute;left:48px;top:560px;width:1153px;height:1px;background:#808080;"></div><div style="position:absolute;left:47px;top:539px;width:1px;height:22px;background:#808080;"></div><div style="position:absolute;left:127px;top:539px;width:1px;height:22px;background:#808080;"></div><div style="position:absolute;left:227px;top:539px;width:1px;height:22px;background:#808080;"></div><div style="position:absolute;left:427px;top:539px;width:1px;height:22px;background:#808080;"></div><div style="position:absolute;left:527px;top:539px;width:1px;height:22px;background:#808080;"></div><div style="position:absolute;left:627px;top:539px;width:1px;height:22px;background:#808080;"></div><div style="position:absolute;left:727px;top:539px;width:1px;height:22px;background:#808080;"></div><div style="position:absolute;left:827px;top:539px;width:1px;height:22px;background:#808080;"></div><div style="position:absolute;left:1027px;top:539px;width:1px;height:22px;background:#808080;"></div><svg style="position:absolute;left:771px;top:543px" width="13" height="13" shape-rendering="crispEdges"><rect width="13" height="13" fill="#fff"/><path d="M0 0.5H12M0.5 0V12" stroke="#808080"/><path d="M1 1.5H11M1.5 1V11" stroke="#404040"/><path d="M12.5 0V13M0 12.5H13" stroke="#fff"/><path d="M11.5 1V12M1 11.5H12" stroke="#d4d0c8"/></svg><div style="position:absolute;left:7px;top:561px;width:40px;height:22px;background:#d4d0c8;"></div><div style="position:absolute;left:8px;top:561px;width:39px;height:1px;background:#fff;"></div><div style="position:absolute;left:8px;top:561px;width:1px;height:21px;background:#fff;"></div><div style="position:absolute;left:8px;top:582px;width:39px;height:1px;background:#808080;"></div><div style="position:absolute;left:48px;top:561px;width:1153px;height:21px;background:#fff;"></div><div style="position:absolute;left:48px;top:582px;width:1153px;height:1px;background:#808080;"></div><div style="position:absolute;left:47px;top:561px;width:1px;height:22px;background:#808080;"></div><div style="position:absolute;left:127px;top:561px;width:1px;height:22px;background:#808080;"></div><div style="position:absolute;left:227px;top:561px;width:1px;height:22px;background:#808080;"></div><div style="position:absolute;left:427px;top:561px;width:1px;height:22px;background:#808080;"></div><div style="position:absolute;left:527px;top:561px;width:1px;height:22px;background:#808080;"></div><div style="position:absolute;left:627px;top:561px;width:1px;height:22px;background:#808080;"></div><div style="position:absolute;left:727px;top:561px;width:1px;height:22px;background:#808080;"></div><div style="position:absolute;left:827px;top:561px;width:1px;height:22px;background:#808080;"></div><div style="position:absolute;left:1027px;top:561px;width:1px;height:22px;background:#808080;"></div><svg style="position:absolute;left:771px;top:565px" width="13" height="13" shape-rendering="crispEdges"><rect width="13" height="13" fill="#fff"/><path d="M0 0.5H12M0.5 0V12" stroke="#808080"/><path d="M1 1.5H11M1.5 1V11" stroke="#404040"/><path d="M12.5 0V13M0 12.5H13" stroke="#fff"/><path d="M11.5 1V12M1 11.5H12" stroke="#d4d0c8"/></svg><div style="position:absolute;left:7px;top:583px;width:40px;height:22px;background:#d4d0c8;"></div><div style="position:absolute;left:8px;top:583px;width:39px;height:1px;background:#fff;"></div><div style="position:absolute;left:8px;top:583px;width:1px;height:21px;background:#fff;"></div><div style="position:absolute;left:8px;top:604px;width:39px;height:1px;background:#808080;"></div><div style="position:absolute;left:48px;top:583px;width:1153px;height:21px;background:#fff;"></div><div style="position:absolute;left:48px;top:604px;width:1153px;height:1px;background:#808080;"></div><div style="position:absolute;left:47px;top:583px;width:1px;height:22px;background:#808080;"></div><div style="position:absolute;left:127px;top:583px;width:1px;height:22px;background:#808080;"></div><div style="position:absolute;left:227px;top:583px;width:1px;height:22px;background:#808080;"></div><div style="position:absolute;left:427px;top:583px;width:1px;height:22px;background:#808080;"></div><div style="position:absolute;left:527px;top:583px;width:1px;height:22px;background:#808080;"></div><div style="position:absolute;left:627px;top:583px;width:1px;height:22px;background:#808080;"></div><div style="position:absolute;left:727px;top:583px;width:1px;height:22px;background:#808080;"></div><div style="position:absolute;left:827px;top:583px;width:1px;height:22px;background:#808080;"></div><div style="position:absolute;left:1027px;top:583px;width:1px;height:22px;background:#808080;"></div><svg style="position:absolute;left:771px;top:587px" width="13" height="13" shape-rendering="crispEdges"><rect width="13" height="13" fill="#fff"/><path d="M0 0.5H12M0.5 0V12" stroke="#808080"/><path d="M1 1.5H11M1.5 1V11" stroke="#404040"/><path d="M12.5 0V13M0 12.5H13" stroke="#fff"/><path d="M11.5 1V12M1 11.5H12" stroke="#d4d0c8"/></svg><div style="position:absolute;left:7px;top:605px;width:40px;height:22px;background:#d4d0c8;"></div><div style="position:absolute;left:8px;top:605px;width:39px;height:1px;background:#fff;"></div><div style="position:absolute;left:8px;top:605px;width:1px;height:21px;background:#fff;"></div><div style="position:absolute;left:8px;top:626px;width:39px;height:1px;background:#808080;"></div><div style="position:absolute;left:48px;top:605px;width:1153px;height:21px;background:#fff;"></div><div style="position:absolute;left:48px;top:626px;width:1153px;height:1px;background:#808080;"></div><div style="position:absolute;left:47px;top:605px;width:1px;height:22px;background:#808080;"></div><div style="position:absolute;left:127px;top:605px;width:1px;height:22px;background:#808080;"></div><div style="position:absolute;left:227px;top:605px;width:1px;height:22px;background:#808080;"></div><div style="position:absolute;left:427px;top:605px;width:1px;height:22px;background:#808080;"></div><div style="position:absolute;left:527px;top:605px;width:1px;height:22px;background:#808080;"></div><div style="position:absolute;left:627px;top:605px;width:1px;height:22px;background:#808080;"></div><div style="position:absolute;left:727px;top:605px;width:1px;height:22px;background:#808080;"></div><div style="position:absolute;left:827px;top:605px;width:1px;height:22px;background:#808080;"></div><div style="position:absolute;left:1027px;top:605px;width:1px;height:22px;background:#808080;"></div><svg style="position:absolute;left:771px;top:609px" width="13" height="13" shape-rendering="crispEdges"><rect width="13" height="13" fill="#fff"/><path d="M0 0.5H12M0.5 0V12" stroke="#808080"/><path d="M1 1.5H11M1.5 1V11" stroke="#404040"/><path d="M12.5 0V13M0 12.5H13" stroke="#fff"/><path d="M11.5 1V12M1 11.5H12" stroke="#d4d0c8"/></svg><div style="position:absolute;left:7px;top:627px;width:40px;height:22px;background:#d4d0c8;"></div><div style="position:absolute;left:8px;top:627px;width:39px;height:1px;background:#fff;"></div><div style="position:absolute;left:8px;top:627px;width:1px;height:21px;background:#fff;"></div><div style="position:absolute;left:8px;top:648px;width:39px;height:1px;background:#808080;"></div><div style="position:absolute;left:48px;top:627px;width:1153px;height:21px;background:#fff;"></div><div style="position:absolute;left:48px;top:648px;width:1153px;height:1px;background:#808080;"></div><div style="position:absolute;left:47px;top:627px;width:1px;height:22px;background:#808080;"></div><div style="position:absolute;left:127px;top:627px;width:1px;height:22px;background:#808080;"></div><div style="position:absolute;left:227px;top:627px;width:1px;height:22px;background:#808080;"></div><div style="position:absolute;left:427px;top:627px;width:1px;height:22px;background:#808080;"></div><div style="position:absolute;left:527px;top:627px;width:1px;height:22px;background:#808080;"></div><div style="position:absolute;left:627px;top:627px;width:1px;height:22px;background:#808080;"></div><div style="position:absolute;left:727px;top:627px;width:1px;height:22px;background:#808080;"></div><div style="position:absolute;left:827px;top:627px;width:1px;height:22px;background:#808080;"></div><div style="position:absolute;left:1027px;top:627px;width:1px;height:22px;background:#808080;"></div><svg style="position:absolute;left:771px;top:631px" width="13" height="13" shape-rendering="crispEdges"><rect width="13" height="13" fill="#fff"/><path d="M0 0.5H12M0.5 0V12" stroke="#808080"/><path d="M1 1.5H11M1.5 1V11" stroke="#404040"/><path d="M12.5 0V13M0 12.5H13" stroke="#fff"/><path d="M11.5 1V12M1 11.5H12" stroke="#d4d0c8"/></svg><div style="position:absolute;left:7px;top:649px;width:40px;height:22px;background:#d4d0c8;"></div><div style="position:absolute;left:8px;top:649px;width:39px;height:1px;background:#fff;"></div><div style="position:absolute;left:8px;top:649px;width:1px;height:21px;background:#fff;"></div><div style="position:absolute;left:8px;top:670px;width:39px;height:1px;background:#808080;"></div><div style="position:absolute;left:48px;top:649px;width:1153px;height:21px;background:#fff;"></div><div style="position:absolute;left:48px;top:670px;width:1153px;height:1px;background:#808080;"></div><div style="position:absolute;left:47px;top:649px;width:1px;height:22px;background:#808080;"></div><div style="position:absolute;left:127px;top:649px;width:1px;height:22px;background:#808080;"></div><div style="position:absolute;left:227px;top:649px;width:1px;height:22px;background:#808080;"></div><div style="position:absolute;left:427px;top:649px;width:1px;height:22px;background:#808080;"></div><div style="position:absolute;left:527px;top:649px;width:1px;height:22px;background:#808080;"></div><div style="position:absolute;left:627px;top:649px;width:1px;height:22px;background:#808080;"></div><div style="position:absolute;left:727px;top:649px;width:1px;height:22px;background:#808080;"></div><div style="position:absolute;left:827px;top:649px;width:1px;height:22px;background:#808080;"></div><div style="position:absolute;left:1027px;top:649px;width:1px;height:22px;background:#808080;"></div><svg style="position:absolute;left:771px;top:653px" width="13" height="13" shape-rendering="crispEdges"><rect width="13" height="13" fill="#fff"/><path d="M0 0.5H12M0.5 0V12" stroke="#808080"/><path d="M1 1.5H11M1.5 1V11" stroke="#404040"/><path d="M12.5 0V13M0 12.5H13" stroke="#fff"/><path d="M11.5 1V12M1 11.5H12" stroke="#d4d0c8"/></svg><div style="position:absolute;left:7px;top:671px;width:40px;height:22px;background:#d4d0c8;"></div><div style="position:absolute;left:8px;top:671px;width:39px;height:1px;background:#fff;"></div><div style="position:absolute;left:8px;top:671px;width:1px;height:21px;background:#fff;"></div><div style="position:absolute;left:8px;top:692px;width:39px;height:1px;background:#808080;"></div><div style="position:absolute;left:48px;top:671px;width:1153px;height:21px;background:#fff;"></div><div style="position:absolute;left:48px;top:692px;width:1153px;height:1px;background:#808080;"></div><div style="position:absolute;left:47px;top:671px;width:1px;height:22px;background:#808080;"></div><div style="position:absolute;left:127px;top:671px;width:1px;height:22px;background:#808080;"></div><div style="position:absolute;left:227px;top:671px;width:1px;height:22px;background:#808080;"></div><div style="position:absolute;left:427px;top:671px;width:1px;height:22px;background:#808080;"></div><div style="position:absolute;left:527px;top:671px;width:1px;height:22px;background:#808080;"></div><div style="position:absolute;left:627px;top:671px;width:1px;height:22px;background:#808080;"></div><div style="position:absolute;left:727px;top:671px;width:1px;height:22px;background:#808080;"></div><div style="position:absolute;left:827px;top:671px;width:1px;height:22px;background:#808080;"></div><div style="position:absolute;left:1027px;top:671px;width:1px;height:22px;background:#808080;"></div><svg style="position:absolute;left:771px;top:675px" width="13" height="13" shape-rendering="crispEdges"><rect width="13" height="13" fill="#fff"/><path d="M0 0.5H12M0.5 0V12" stroke="#808080"/><path d="M1 1.5H11M1.5 1V11" stroke="#404040"/><path d="M12.5 0V13M0 12.5H13" stroke="#fff"/><path d="M11.5 1V12M1 11.5H12" stroke="#d4d0c8"/></svg><div style="position:absolute;left:1201px;top:178px;width:16px;height:515px;background:repeating-conic-gradient(#fff 0 25%,#d4d0c8 0 50%) 0 0/2px 2px;"></div><div style="position:absolute;left:1201px;top:178px;width:16px;height:16px;background:#d4d0c8;box-shadow:inset -1px -1px #404040,inset 1px 1px #d4d0c8,inset -2px -2px #808080,inset 2px 2px #fff"></div><svg style="position:absolute;left:1201px;top:178px" width="16" height="16"><path d="M4 10h7l-3.5-4z" fill="#000"/></svg><div style="position:absolute;left:1201px;top:194px;width:16px;height:130px;background:#d4d0c8;box-shadow:inset -1px -1px #404040,inset 1px 1px #d4d0c8,inset -2px -2px #808080,inset 2px 2px #fff"></div><div style="position:absolute;left:1201px;top:677px;width:16px;height:16px;background:#d4d0c8;box-shadow:inset -1px -1px #404040,inset 1px 1px #d4d0c8,inset -2px -2px #808080,inset 2px 2px #fff"></div><svg style="position:absolute;left:1201px;top:677px" width="16" height="16"><path d="M4 6h7l-3.5 4z" fill="#000"/></svg><div style="position:absolute;left:7px;top:693px;width:1194px;height:16px;background:repeating-conic-gradient(#fff 0 25%,#d4d0c8 0 50%) 0 0/2px 2px;"></div><div style="position:absolute;left:7px;top:693px;width:16px;height:16px;background:#d4d0c8;box-shadow:inset -1px -1px #404040,inset 1px 1px #d4d0c8,inset -2px -2px #808080,inset 2px 2px #fff"></div><svg style="position:absolute;left:7px;top:693px" width="16" height="16"><path d="M10 4v7l-4-3.5z" fill="#000"/></svg><div style="position:absolute;left:23px;top:693px;width:970px;height:16px;background:#d4d0c8;box-shadow:inset -1px -1px #404040,inset 1px 1px #d4d0c8,inset -2px -2px #808080,inset 2px 2px #fff"></div><div style="position:absolute;left:1185px;top:693px;width:16px;height:16px;background:#d4d0c8;box-shadow:inset -1px -1px #404040,inset 1px 1px #d4d0c8,inset -2px -2px #808080,inset 2px 2px #fff"></div><svg style="position:absolute;left:1185px;top:693px" width="16" height="16"><path d="M6 4v7l4-3.5z" fill="#000"/></svg><div style="position:absolute;left:1201px;top:693px;width:16px;height:16px;background:#d4d0c8;"></div><div style="position:absolute;left:6px;top:710px;width:1213px;height:22px;background:#d4d0c8;"></div><div style="position:absolute;left:6px;top:710px;width:1213px;height:1px;background:#fff;"></div><svg style="position:absolute;left:1203px;top:717px" width="14" height="14"><rect x="11" y="3" width="2" height="2" fill="#fff"/><rect x="10" y="2" width="2" height="2" fill="#808080"/><rect x="11" y="7" width="2" height="2" fill="#fff"/><rect x="10" y="6" width="2" height="2" fill="#808080"/><rect x="7" y="7" width="2" height="2" fill="#fff"/><rect x="6" y="6" width="2" height="2" fill="#808080"/><rect x="11" y="11" width="2" height="2" fill="#fff"/><rect x="10" y="10" width="2" height="2" fill="#808080"/><rect x="7" y="11" width="2" height="2" fill="#fff"/><rect x="6" y="10" width="2" height="2" fill="#808080"/><rect x="3" y="11" width="2" height="2" fill="#fff"/><rect x="2" y="10" width="2" height="2" fill="#808080"/></svg>
<svg style="position:absolute;left:12px;top:28px;" width="16" height="15" viewBox="0 0 16 15"><g shape-rendering="crispEdges"><rect x="1.5" y="0.5" width="13" height="13" fill="#dcd8d0" stroke="#c4c4cc"/><path d="M1 6.5h6M6.5 0v14M7 8.5h7" stroke="#c8ccd0"/></g><rect x="7.5" y="1.5" width="6" height="6" fill="#ffd838" stroke="#b88a08"/><rect x="2.5" y="5.5" width="3" height="4" fill="#e04040" stroke="#9a1010"/><rect x="7" y="9" width="5" height="4" fill="#6aa0f0"/><rect x="7" y="12" width="5" height="1" fill="#2a60c0"/></svg><svg style="position:absolute;left:13px;top:53px;" width="18" height="18" viewBox="0 0 18 18"><path d="M8.5 7.5v-3a3.5 3.5 0 0 1 7 0v2" fill="none" stroke="#c4c4c4" stroke-width="2"/><rect x="1.5" y="7.5" width="10" height="9" rx="1" fill="#d8d8d8" stroke="#c4c4c4"/><path d="M7 10.5l-2 1.5 2 1.5" fill="none" stroke="#c0c0c0" stroke-width=".8"/></svg><svg style="position:absolute;left:38px;top:53px;" width="16" height="18" viewBox="0 0 16 18"><path d="M2.5 8V6.5a5 5 0 0 1 10 0V8" fill="none" stroke="#6a6e78" stroke-width="1"/><path d="M4.5 8V6.5a3 3 0 0 1 6 0V8" fill="none" stroke="#6a6e78" stroke-width="1"/><path d="M3.5 8V6.5a4 4 0 0 1 8 0V8" fill="none" stroke="#e8e8ec" stroke-width="1"/><path d="M1.5 7.5h12v3.5a6 5.8 0 0 1-12 0z" fill="#f4d438" stroke="#d08e0c"/><rect x="2" y="8" width="11" height="1.2" fill="#fff0a0"/><circle cx="7.5" cy="11" r="1.3" fill="#c07e0a"/><rect x="7" y="11" width="1" height="3" fill="#c07e0a"/></svg><svg style="position:absolute;left:64px;top:53px;" width="18" height="17" viewBox="0 0 18 17"><path d="M8 14.5c0-4 2-6 5.5-6s4.5 2 4.5 6z" fill="#eaf2f4" stroke="#a8b8bc"/><circle cx="11.2" cy="4.6" r="3" fill="#eab680"/><path d="M8.2 4.6a3 3 0 0 1 6 0c0-1-1-1.6-3-1.6s-3 .6-3 1.6z" fill="#5a4020" stroke="#4a3210" stroke-width=".8"/><path d="M8.3 5.5a3 3 0 0 0 5.8 0" fill="none" stroke="#c88a20" stroke-width=".9"/><path d="M1 15c0-3 2-4.5 6-4.5s6 1.5 6 4.5z" fill="#b0dc50" stroke="#5a9a1a"/><circle cx="7" cy="7.6" r="3" fill="#f0c898"/><path d="M4 7.6a3 3 0 0 1 6 0" fill="#a87a2a" stroke="#98681a" stroke-width=".8"/><path d="M4.1 8.6a3 3 0 0 0 5.8 0" fill="none" stroke="#c8901a" stroke-width=".9"/></svg><svg style="position:absolute;left:144px;top:54px;" width="13" height="17" viewBox="0 0 13 17"><defs><linearGradient id="cb" x1="0" y1="0" x2="1" y2="0"><stop offset="0" stop-color="#9a5a1a"/><stop offset=".5" stop-color="#e8b870"/><stop offset="1" stop-color="#9a5a1a"/></linearGradient></defs><rect x="0.5" y="2.5" width="11" height="13" rx="1.8" fill="url(#cb)" stroke="#8a4e14" stroke-width="1"/><rect x="2" y="4" width="8" height="10" fill="#fff"/><path d="M2.8 4.5h6.4l-1-1.8h-1.2a1 1 0 0 0-2 0h-1.2z" fill="#fff" stroke="#6a6a6a" stroke-width=".9"/><path d="M3 6.5h3M3 8.5h6M3 10.5h5M3 12.5h1M5 12.5h4" stroke="#8a8a8a" stroke-width="1"/></svg><svg style="position:absolute;left:240px;top:53px;" width="18" height="18" viewBox="0 0 18 18"><g transform="translate(6.4 1.4)" stroke="#7a7a7a" stroke-width=".8" stroke-linejoin="miter"><path d="M0 2L4 0 8 2 4 4z" fill="#f4f4f4"/><path d="M0 2L4 4V9L0 7z" fill="#fdfdfd"/><path d="M4 4L8 2V7L4 9z" fill="#a8a8a8"/></g><g transform="translate(1.4 4.4)" stroke="#7a7a7a" stroke-width=".8" stroke-linejoin="miter"><path d="M0 2L4 0 8 2 4 4z" fill="#f4f4f4"/><path d="M0 2L4 4V9L0 7z" fill="#fdfdfd"/><path d="M4 4L8 2V7L4 9z" fill="#a8a8a8"/></g><g transform="translate(8.4 8.4)" stroke="#7a7a7a" stroke-width=".8" stroke-linejoin="miter"><path d="M0 2L4 0 8 2 4 4z" fill="#f4f4f4"/><path d="M0 2L4 4V9L0 7z" fill="#fdfdfd"/><path d="M4 4L8 2V7L4 9z" fill="#a8a8a8"/></g></svg><svg style="position:absolute;left:296px;top:53px;" width="16" height="18" viewBox="0 0 16 18"><defs><linearGradient id="dr" x1="0" y1="0" x2="1" y2="0"><stop offset="0" stop-color="#b8b8b8"/><stop offset=".35" stop-color="#fafafa"/><stop offset="1" stop-color="#d0d0d0"/></linearGradient></defs><path d="M1.5 3v12.5a6.5 1.8 0 0 0 13 0V3" fill="url(#dr)" stroke="#7a7a7a" stroke-width="1"/><path d="M1.5 4.2a6.5 1.8 0 0 0 13 0M1.5 8.2a6.5 1.8 0 0 0 13 0M1.5 12.1a6.5 1.8 0 0 0 13 0" fill="none" stroke="#6a6a6a" stroke-width="1"/><ellipse cx="8" cy="2.6" rx="6.5" ry="1.8" fill="#fdfdfd" stroke="#8a8a8a" stroke-width="1"/></svg><svg style="position:absolute;left:394px;top:54px;" width="15" height="16" viewBox="0 0 15 16"><rect x="0.5" y="0.5" width="14" height="15" rx="1.5" fill="#fff" stroke="#7a7a7a"/><rect x="2" y="2" width="11" height="3.5" fill="#a8a8a8"/><rect x="2" y="7" width="11" height="7" fill="#4a7cc4"/><rect x="5" y="10" width="5" height="1.4" fill="#fff"/></svg><svg style="position:absolute;left:500px;top:54px;" width="15" height="16" viewBox="0 0 15 16"><path d="M0.5 0.5h10l3.5 3.5v11.5h-13.5z" fill="#f6f6f6" stroke="#6a6a6a"/><path d="M10.5 0.5v3.5h3.5" fill="#fff" stroke="#9a9a9a"/><rect x="3" y="5" width="2" height="9" fill="#3a78d8"/><rect x="6.5" y="9" width="2" height="5" fill="#3a78d8"/><rect x="10" y="6" width="2" height="8" fill="#3a78d8"/></svg><svg style="position:absolute;left:569px;top:53px;" width="19" height="19" viewBox="0 0 19 19"><defs><linearGradient id="gw" x1="0" y1="0" x2="0.3" y2="1"><stop offset="0" stop-color="#d8e8c4"/><stop offset="1" stop-color="#fbfdf6"/></linearGradient><linearGradient id="gb" x1="0" y1="0" x2="0" y2="1"><stop offset="0" stop-color="#78a858"/><stop offset="1" stop-color="#3a6a1e"/></linearGradient></defs><rect x="1" y="1" width="16" height="14" rx="1.2" fill="url(#gb)"/><rect x="2" y="2" width="14" height="2.4" fill="#acd094"/><rect x="2" y="5" width="14" height="9" fill="url(#gw)"/><path d="M12 12.3L8.6 15.8" stroke="#c88a10" stroke-width="3.6" stroke-linecap="round"/><path d="M12 12.3L8.6 15.8" stroke="#f8dc50" stroke-width="2" stroke-linecap="round"/><circle cx="13.8" cy="10" r="3.6" fill="#f6d848" stroke="#c88a10" stroke-width="1"/><circle cx="14.4" cy="9.3" r=".9" fill="#b87a10"/></svg><svg style="position:absolute;left:1135px;top:53px;" width="18" height="18" viewBox="0 0 18 18"><defs><linearGradient id="pr" x1="0" y1="0" x2="0" y2="1"><stop offset="0" stop-color="#f8f8f8"/><stop offset=".5" stop-color="#e0e0e0"/><stop offset="1" stop-color="#c8c8c8"/></linearGradient></defs><path d="M3.5 5.5l1.5-2h8l1.5 2z" fill="#404040"/><rect x="1.5" y="4.5" width="15" height="9" rx="2" fill="url(#pr)" stroke="#4a4a4a" stroke-width="1"/><rect x="5" y="1.5" width="8" height="5" rx="1" fill="#fff" stroke="#4a4a4a" stroke-width="1"/><rect x="4.5" y="11.5" width="9" height="5" rx="1" fill="#fff" stroke="#4a4a4a" stroke-width="1"/><rect x="5" y="12" width="8" height="1" fill="#e4e4e4"/></svg><svg style="position:absolute;left:334px;top:86px;" width="17" height="16" viewBox="0 0 17 16"><path d="M0.5 2.5L2.5 0.5H13L15.5 3V15.5H3L0.5 13z" fill="#fff2b0" stroke="#c88a10" stroke-linejoin="round"/><rect x="4" y="4.5" width="10.5" height="10" fill="#f0cc38"/><path d="M3.5 4.5H15M3.5 4.5V15" stroke="#fff8d8" stroke-width="1"/><path d="M2.5 2.5V14" stroke="#d8a020" stroke-width=".9"/><path d="M9.2 5V15" stroke="#d8a828" stroke-width=".9"/><path d="M7 0.8L9.5 4.2" stroke="#e0b850" stroke-width=".9"/></svg><svg style="position:absolute;left:403px;top:86px;" width="18" height="18" viewBox="0 0 18 18"><g transform="translate(6.4 1.4)" stroke="#7a7a7a" stroke-width=".8" stroke-linejoin="miter"><path d="M0 2L4 0 8 2 4 4z" fill="#f4f4f4"/><path d="M0 2L4 4V9L0 7z" fill="#fdfdfd"/><path d="M4 4L8 2V7L4 9z" fill="#a8a8a8"/></g><g transform="translate(1.4 4.4)" stroke="#7a7a7a" stroke-width=".8" stroke-linejoin="miter"><path d="M0 2L4 0 8 2 4 4z" fill="#f4f4f4"/><path d="M0 2L4 4V9L0 7z" fill="#fdfdfd"/><path d="M4 4L8 2V7L4 9z" fill="#a8a8a8"/></g><g transform="translate(8.4 8.4)" stroke="#7a7a7a" stroke-width=".8" stroke-linejoin="miter"><path d="M0 2L4 0 8 2 4 4z" fill="#f4f4f4"/><path d="M0 2L4 4V9L0 7z" fill="#fdfdfd"/><path d="M4 4L8 2V7L4 9z" fill="#a8a8a8"/></g></svg><svg style="position:absolute;left:456px;top:85px;" width="22" height="18" viewBox="0 0 22 18"><defs><linearGradient id="spk" x1="0" y1="0" x2="0" y2="1"><stop offset="0" stop-color="#f4f4f4"/><stop offset=".6" stop-color="#c8c8c8"/><stop offset="1" stop-color="#9a9a9a"/></linearGradient></defs><path d="M3.5 6.5H7.5L11.5 3.5V15.5L7.5 12.5H3.5Z" fill="url(#spk)" stroke="#707070" stroke-width=".9" stroke-linejoin="round"/><path d="M12.6 7Q14.6 9.5 12.6 12" fill="none" stroke="#f07818" stroke-width="2"/><path d="M15.2 4.5Q19.4 9.6 15.2 14.8" fill="none" stroke="#f07818" stroke-width="2.2"/></svg><svg style="position:absolute;left:526px;top:85px;" width="19" height="18" viewBox="0 0 19 18"><path d="M2.5 2v14.5H17.5" fill="none" stroke="#6e6e6e" stroke-width="1"/><path d="M4.4 14.5C9 14.5 13 14 16.5 11.5" fill="none" stroke="#3a8a2a" stroke-width="1.1"/><path d="M4.4 3.2C6.5 9 8 12.5 10 12.5S13.5 9 15.5 3.2" fill="none" stroke="#3a5ac8" stroke-width="1.1"/><path d="M4.4 12.5C6 8 8 5.3 10 5.3S14 6 16.8 8.6" fill="none" stroke="#f03a10" stroke-width="1.1"/></svg><svg style="position:absolute;left:601px;top:86px;" width="17" height="16" viewBox="0 0 17 16"><defs><linearGradient id="cal" x1="0" y1="0" x2="0" y2="1"><stop offset="0" stop-color="#86ac62"/><stop offset="1" stop-color="#3e6420"/></linearGradient></defs><rect x="1" y="1" width="15" height="14" rx="1.2" fill="url(#cal)"/><rect x="2" y="2" width="13" height="2.6" fill="#b6d29c"/><rect x="2" y="5" width="13" height="9" fill="#f8fbf2"/><g fill="#7aa452"><circle cx="4.3" cy="6.6" r=".9"/><circle cx="4.3" cy="8.6" r=".9"/><circle cx="4.3" cy="10.6" r=".9"/><circle cx="4.3" cy="12.6" r=".9"/><rect x="6" y="6" width="8" height="1.2"/><rect x="6" y="8" width="8" height="1.2"/><rect x="6" y="10" width="8" height="1.2"/><rect x="6" y="12" width="8" height="1.2"/></g></svg><svg style="position:absolute;left:680px;top:86px;" width="16" height="17" viewBox="0 0 16 17"><rect x="1.5" y="1.5" width="13" height="14" rx="1" fill="#fff" stroke="#7a7a7a"/><rect x="3" y="2.5" width="10" height="1.8" fill="#3e70c0"/><rect x="3" y="5" width="1.8" height="6.8" fill="#3e70c0"/><rect x="6" y="5" width="7" height="2.6" fill="#b4b4b4"/><rect x="6" y="9" width="7" height="2.8" fill="#b4b4b4"/><rect x="3" y="13" width="10" height="1" fill="#3e70c0"/></svg><svg style="position:absolute;left:823px;top:85px;" width="18" height="18" viewBox="0 0 18 18"><defs><radialGradient id="gg" cx=".4" cy=".3" r=".8"><stop offset="0" stop-color="#707076"/><stop offset="1" stop-color="#3e3e44"/></radialGradient></defs><circle cx="8.9" cy="8.8" r="7.6" fill="url(#gg)" stroke="#2a2a2e" stroke-width="1"/><path d="M4.6 5.4l4.4 4.4" stroke="#fff" stroke-width="1.3"/><g fill="#e8e8e8"><circle cx="7.1" cy="3.6" r=".6"/><circle cx="10.7" cy="3.6" r=".6"/><circle cx="13.5" cy="5.5" r=".6"/><circle cx="3.3" cy="8.5" r=".6"/><circle cx="14.6" cy="8.5" r=".6"/></g></svg><svg style="position:absolute;left:20px;top:118px;" width="18" height="18" viewBox="0 0 18 18"><defs><linearGradient id="gw2" x1="0" y1="0" x2="0.3" y2="1"><stop offset="0" stop-color="#c8dca8"/><stop offset="1" stop-color="#fbfdf6"/></linearGradient></defs><rect x="1.5" y="1.5" width="15" height="13" fill="url(#gw2)" stroke="#5e8440" stroke-width="1"/><rect x="2" y="2" width="14" height="2.5" fill="#94bc6e"/><circle cx="13.5" cy="13.5" r="4" fill="#fff"/><circle cx="13.5" cy="13.5" r="3.3" fill="#3e7a22"/><path d="M13.5 11.5v4M11.5 13.5h4" stroke="#fff" stroke-width="1"/></svg><svg style="position:absolute;left:113px;top:119px;" width="16" height="16" viewBox="0 0 16 16"><defs><linearGradient id="gx" x1="0" y1="0" x2="0" y2="1"><stop offset="0" stop-color="#f08a58"/><stop offset="1" stop-color="#d8401a"/></linearGradient></defs><path d="M1 3.5L3.5 1 8 5.5 12.5 1 15 3.5 10.5 8 15 12.5 12.5 15 8 10.5 3.5 15 1 12.5 5.5 8z" fill="url(#gx)" stroke="#b02010" stroke-width="1" stroke-linejoin="round"/><path d="M2.5 3.5L3.5 2.5 8 7 12.5 2.5 13.5 3.5" stroke="#ffc0a0" stroke-width=".6" fill="none" opacity=".7"/></svg><svg style="position:absolute;left:381px;top:150px;" width="20" height="20" viewBox="0 0 20 20"><g fill="none" stroke-linecap="butt"><path d="M4.6 13.5C4 9 7.5 6.5 11.5 6.8" stroke="#3c741c" stroke-width="4.2"/><path d="M4.6 13.5C4 9 7.5 6.5 11.5 6.8" stroke="#94c868" stroke-width="2"/><path d="M15.4 9.5C16 14 12.5 16.5 8.5 16.2" stroke="#3c741c" stroke-width="4.2"/><path d="M15.4 9.5C16 14 12.5 16.5 8.5 16.2" stroke="#7ab050" stroke-width="2"/></g><path d="M11 2.8L16.2 7.2 11 10.8z" fill="#6aa840" stroke="#3c741c" stroke-width=".9" stroke-linejoin="round"/><path d="M9 12.2L3.8 15.8 9 19.2z" fill="#4e8a2a" stroke="#3c741c" stroke-width=".9" stroke-linejoin="round"/></svg>
<div class="t" style="left:23.70px;top:5.71px;font:normal bold 11px/15px 'Liberation Sans', sans-serif;letter-spacing:0.059px;color:#fff;">AccuSPHERE Solo - [Loads]</div><div class="t" style="left:38.90px;top:27.71px;font:normal normal 11px/15px 'Liberation Sans', sans-serif;letter-spacing:-0.259px;color:#000;">File</div><div class="t" style="left:74.40px;top:27.71px;font:normal normal 11px/15px 'Liberation Sans', sans-serif;letter-spacing:-0.289px;color:#000;">View</div><div class="t" style="left:115.00px;top:27.71px;font:normal normal 11px/15px 'Liberation Sans', sans-serif;letter-spacing:-0.199px;color:#000;">Equipment</div><div class="t" style="left:184.00px;top:27.71px;font:normal normal 11px/15px 'Liberation Sans', sans-serif;letter-spacing:-0.157px;color:#000;">Language</div><div class="t" style="left:250.40px;top:27.71px;font:normal normal 11px/15px 'Liberation Sans', sans-serif;letter-spacing:-0.175px;color:#000;">Windows</div><div class="t" style="left:311.90px;top:27.71px;font:normal normal 11px/15px 'Liberation Sans', sans-serif;letter-spacing:-0.181px;color:#000;">Help</div><div class="t" style="left:82.80px;top:55.71px;font:normal normal 11px/15px 'Liberation Sans', sans-serif;letter-spacing:-0.132px;color:#000;">Customers</div><div class="t" style="left:160.40px;top:55.71px;font:normal normal 11px/15px 'Liberation Sans', sans-serif;letter-spacing:-0.163px;color:#000;">Specifications</div><div class="t" style="left:258.40px;top:55.71px;font:normal normal 11px/15px 'Liberation Sans', sans-serif;letter-spacing:-0.197px;color:#000;">Loads</div><div class="t" style="left:314.00px;top:55.71px;font:normal normal 11px/15px 'Liberation Sans', sans-serif;letter-spacing:-0.334px;color:#000;">Manage Drums</div><div class="t" style="left:411.40px;top:55.71px;font:normal normal 11px/15px 'Liberation Sans', sans-serif;letter-spacing:-0.134px;color:#000;">Multi-Dashboard</div><div class="t" style="left:516.40px;top:55.71px;font:normal normal 11px/15px 'Liberation Sans', sans-serif;letter-spacing:0.067px;color:#000;">Reports</div><div class="t" style="left:588.40px;top:55.71px;font:normal normal 11px/15px 'Liberation Sans', sans-serif;letter-spacing:-0.122px;color:#000;">Administration</div><div class="t" style="left:1153.40px;top:55.71px;font:normal normal 11px/15px 'Liberation Sans', sans-serif;letter-spacing:-0.103px;color:#000;">Print Screen</div><div class="t" style="left:13.60px;top:86.59px;font:normal normal 12px/16px 'Liberation Sans', sans-serif;letter-spacing:-0.166px;color:#000;">Selected Equipment:</div><div class="t" style="left:131.70px;top:86.59px;font:normal bold 12px/16px 'Liberation Sans', sans-serif;letter-spacing:-0.226px;color:#000;">Chamber 2</div><div class="t" style="left:351.70px;top:87.71px;font:normal normal 11px/15px 'Liberation Sans', sans-serif;letter-spacing:-0.364px;color:#000;">Chamber</div><div class="t" style="left:421.80px;top:87.71px;font:normal normal 11px/15px 'Liberation Sans', sans-serif;letter-spacing:-0.197px;color:#000;">Loads</div><div class="t" style="left:476.80px;top:87.71px;font:normal normal 11px/15px 'Liberation Sans', sans-serif;letter-spacing:0.093px;color:#000;">Events</div><div class="t" style="left:545.90px;top:87.71px;font:normal normal 11px/15px 'Liberation Sans', sans-serif;letter-spacing:-0.001px;color:#000;">Charts</div><div class="t" style="left:619.80px;top:87.71px;font:normal normal 11px/15px 'Liberation Sans', sans-serif;letter-spacing:-0.099px;color:#000;">Calibration</div><div class="t" style="left:697.70px;top:87.71px;font:normal normal 11px/15px 'Liberation Sans', sans-serif;letter-spacing:-0.168px;color:#000;">Equipment/Phase Config</div><div class="t" style="left:841.70px;top:87.71px;font:normal normal 11px/15px 'Liberation Sans', sans-serif;letter-spacing:-0.148px;color:#000;">Dashboard</div><div class="t" style="left:1101.10px;top:84.83px;font:italic bold 18.5px/22.5px 'Liberation Sans', sans-serif;letter-spacing:0.042px;color:#000;">Chamber 2</div><div class="t" style="left:38.60px;top:120.71px;font:normal normal 11px/15px 'Liberation Sans', sans-serif;letter-spacing:-0.050px;color:#000;">Create Load</div><div class="t" style="left:131.00px;top:120.71px;font:normal normal 11px/15px 'Liberation Sans', sans-serif;letter-spacing:-0.175px;color:#000;">Delete Load</div><div class="t" style="left:35.20px;top:153.59px;font:normal normal 12px/16px 'Liberation Sans', sans-serif;letter-spacing:0.000px;color:#fff;transform:scaleX(0.8760);transform-origin:0 0;">Specific Customer</div><div class="t" style="left:135.60px;top:153.59px;font:normal normal 12px/16px 'Liberation Sans', sans-serif;letter-spacing:0.000px;color:#808080;transform:scaleX(0.8937);transform-origin:0 0;">AhmadCust1</div><div class="t" style="left:407.00px;top:152.59px;font:normal normal 12px/16px 'Liberation Sans', sans-serif;letter-spacing:0.000px;color:#fff;transform:scaleX(0.8755);transform-origin:0 0;">Refresh</div><div class="t" style="left:53.60px;top:186.59px;font:normal normal 12px/16px 'Liberation Sans', sans-serif;letter-spacing:0.000px;color:#000;transform:scaleX(0.9039);transform-origin:0 0;">Load ID</div><div class="t" style="left:133.90px;top:179.59px;font:normal normal 12px/16px 'Liberation Sans', sans-serif;letter-spacing:0.000px;color:#000;transform:scaleX(0.8993);transform-origin:0 0;">Customer</div><div class="t" style="left:133.90px;top:192.59px;font:normal normal 12px/16px 'Liberation Sans', sans-serif;letter-spacing:0.000px;color:#000;transform:scaleX(0.9039);transform-origin:0 0;">Load ID</div><div class="t" style="left:232.60px;top:186.59px;font:normal normal 12px/16px 'Liberation Sans', sans-serif;letter-spacing:0.000px;color:#000;transform:scaleX(0.8993);transform-origin:0 0;">Customer</div><div class="t" style="left:433.30px;top:186.59px;font:normal normal 12px/16px 'Liberation Sans', sans-serif;letter-spacing:0.000px;color:#000;transform:scaleX(0.8826);transform-origin:0 0;">Pallet Count</div><div class="t" style="left:534.00px;top:186.59px;font:normal normal 12px/16px 'Liberation Sans', sans-serif;letter-spacing:0.000px;color:#000;transform:scaleX(0.8880);transform-origin:0 0;">Spec Version</div><div class="t" style="left:633.90px;top:179.59px;font:normal normal 12px/16px 'Liberation Sans', sans-serif;letter-spacing:0.000px;color:#000;transform:scaleX(0.8993);transform-origin:0 0;">Customer</div><div class="t" style="left:633.90px;top:192.59px;font:normal normal 12px/16px 'Liberation Sans', sans-serif;letter-spacing:0.000px;color:#000;transform:scaleX(0.9037);transform-origin:0 0;">Spec ID</div><div class="t" style="left:733.80px;top:186.59px;font:normal normal 12px/16px 'Liberation Sans', sans-serif;letter-spacing:0.000px;color:#000;transform:scaleX(0.8994);transform-origin:0 0;">Validation Spec</div><div class="t" style="left:833.60px;top:186.59px;font:normal normal 12px/16px 'Liberation Sans', sans-serif;letter-spacing:0.000px;color:#000;transform:scaleX(0.8967);transform-origin:0 0;">Description</div><div class="t" style="left:1033.60px;top:186.59px;font:normal normal 12px/16px 'Liberation Sans', sans-serif;letter-spacing:0.000px;color:#000;transform:scaleX(0.8816);transform-origin:0 0;">Special Processing Instructions</div><div class="t" style="left:50.60px;top:211.59px;font:normal normal 12px/16px 'Liberation Sans', sans-serif;letter-spacing:0.000px;color:#fff;transform:scaleX(0.9055);transform-origin:0 0;">301192</div><div class="t" style="left:130.60px;top:211.59px;font:normal normal 12px/16px 'Liberation Sans', sans-serif;letter-spacing:0.000px;color:#fff;transform:scaleX(0.8996);transform-origin:0 0;">TEST002</div><div class="t" style="left:230.60px;top:211.59px;font:normal normal 12px/16px 'Liberation Sans', sans-serif;letter-spacing:0.000px;color:#fff;transform:scaleX(0.8918);transform-origin:0 0;">KONNEXIS INC</div><div class="t" style="left:430.60px;top:211.59px;font:normal normal 12px/16px 'Liberation Sans', sans-serif;letter-spacing:0.000px;color:#fff;transform:scaleX(0.9551);transform-origin:0 0;">23</div><div class="t" style="left:530.60px;top:211.59px;font:normal normal 12px/16px 'Liberation Sans', sans-serif;letter-spacing:0.000px;color:#fff;transform:scaleX(0.9232);transform-origin:0 0;">13.0</div><div class="t" style="left:630.60px;top:211.59px;font:normal normal 12px/16px 'Liberation Sans', sans-serif;letter-spacing:0.000px;color:#fff;transform:scaleX(0.8903);transform-origin:0 0;">Steam Cond Loop</div><div class="t" style="left:830.60px;top:211.59px;font:normal normal 12px/16px 'Liberation Sans', sans-serif;letter-spacing:0.000px;color:#fff;transform:scaleX(0.8909);transform-origin:0 0;">Test InSpec Time</div><div class="t" style="left:50.60px;top:233.59px;font:normal normal 12px/16px 'Liberation Sans', sans-serif;letter-spacing:0.000px;color:#000;transform:scaleX(0.9055);transform-origin:0 0;">301191</div><div class="t" style="left:130.60px;top:233.59px;font:normal normal 12px/16px 'Liberation Sans', sans-serif;letter-spacing:0.000px;color:#000;transform:scaleX(0.9196);transform-origin:0 0;">NAD</div><div class="t" style="left:230.60px;top:233.59px;font:normal normal 12px/16px 'Liberation Sans', sans-serif;letter-spacing:0.000px;color:#000;transform:scaleX(0.8918);transform-origin:0 0;">KONNEXIS INC</div><div class="t" style="left:430.60px;top:233.59px;font:normal normal 12px/16px 'Liberation Sans', sans-serif;letter-spacing:0.000px;color:#000;transform:scaleX(0.9551);transform-origin:0 0;">32</div><div class="t" style="left:530.60px;top:233.59px;font:normal normal 12px/16px 'Liberation Sans', sans-serif;letter-spacing:0.000px;color:#000;transform:scaleX(0.9232);transform-origin:0 0;">10.1</div><div class="t" style="left:830.60px;top:233.59px;font:normal normal 12px/16px 'Liberation Sans', sans-serif;letter-spacing:0.000px;color:#000;transform:scaleX(0.9019);transform-origin:0 0;">No Desc</div><div class="t" style="left:1030.60px;top:233.59px;font:normal normal 12px/16px 'Liberation Sans', sans-serif;letter-spacing:0.000px;color:#000;transform:scaleX(0.9298);transform-origin:0 0;">N/A</div><div class="t" style="left:50.60px;top:255.59px;font:normal normal 12px/16px 'Liberation Sans', sans-serif;letter-spacing:0.000px;color:#000;transform:scaleX(0.9055);transform-origin:0 0;">301185</div><div class="t" style="left:130.60px;top:255.59px;font:normal normal 12px/16px 'Liberation Sans', sans-serif;letter-spacing:0.000px;color:#000;transform:scaleX(0.9032);transform-origin:0 0;">2012-11</div><div class="t" style="left:230.60px;top:255.59px;font:normal normal 12px/16px 'Liberation Sans', sans-serif;letter-spacing:0.000px;color:#000;transform:scaleX(0.8918);transform-origin:0 0;">KONNEXIS INC</div><div class="t" style="left:530.60px;top:255.59px;font:normal normal 12px/16px 'Liberation Sans', sans-serif;letter-spacing:0.000px;color:#000;transform:scaleX(0.9244);transform-origin:0 0;">11.0</div><div class="t" style="left:830.60px;top:255.59px;font:normal normal 12px/16px 'Liberation Sans', sans-serif;letter-spacing:0.000px;color:#000;transform:scaleX(0.9257);transform-origin:0 0;">Test</div><div class="t" style="left:50.60px;top:277.59px;font:normal normal 12px/16px 'Liberation Sans', sans-serif;letter-spacing:0.000px;color:#000;transform:scaleX(0.9055);transform-origin:0 0;">301184</div><div class="t" style="left:130.60px;top:277.59px;font:normal normal 12px/16px 'Liberation Sans', sans-serif;letter-spacing:0.000px;color:#000;transform:scaleX(0.9027);transform-origin:0 0;">2012-10</div><div class="t" style="left:230.60px;top:277.59px;font:normal normal 12px/16px 'Liberation Sans', sans-serif;letter-spacing:0.000px;color:#000;transform:scaleX(0.8918);transform-origin:0 0;">KONNEXIS INC</div><div class="t" style="left:530.60px;top:277.59px;font:normal normal 12px/16px 'Liberation Sans', sans-serif;letter-spacing:0.000px;color:#000;transform:scaleX(0.9232);transform-origin:0 0;">10.1</div><div class="t" style="left:830.60px;top:277.59px;font:normal normal 12px/16px 'Liberation Sans', sans-serif;letter-spacing:0.000px;color:#000;transform:scaleX(0.9257);transform-origin:0 0;">Test</div><div class="t" style="left:50.60px;top:299.59px;font:normal normal 12px/16px 'Liberation Sans', sans-serif;letter-spacing:0.000px;color:#000;transform:scaleX(0.9055);transform-origin:0 0;">301183</div><div class="t" style="left:130.60px;top:299.59px;font:normal normal 12px/16px 'Liberation Sans', sans-serif;letter-spacing:0.000px;color:#000;transform:scaleX(0.9027);transform-origin:0 0;">2012-09</div><div class="t" style="left:230.60px;top:299.59px;font:normal normal 12px/16px 'Liberation Sans', sans-serif;letter-spacing:0.000px;color:#000;transform:scaleX(0.8918);transform-origin:0 0;">KONNEXIS INC</div><div class="t" style="left:530.60px;top:299.59px;font:normal normal 12px/16px 'Liberation Sans', sans-serif;letter-spacing:0.000px;color:#000;transform:scaleX(0.9232);transform-origin:0 0;">10.1</div><div class="t" style="left:830.60px;top:299.59px;font:normal normal 12px/16px 'Liberation Sans', sans-serif;letter-spacing:0.000px;color:#000;transform:scaleX(0.9318);transform-origin:0 0;">test</div><div class="t" style="left:50.60px;top:321.59px;font:normal normal 12px/16px 'Liberation Sans', sans-serif;letter-spacing:0.000px;color:#000;transform:scaleX(0.9055);transform-origin:0 0;">301181</div><div class="t" style="left:130.60px;top:321.59px;font:normal normal 12px/16px 'Liberation Sans', sans-serif;letter-spacing:0.000px;color:#000;transform:scaleX(0.9027);transform-origin:0 0;">2012-05</div><div class="t" style="left:230.60px;top:321.59px;font:normal normal 12px/16px 'Liberation Sans', sans-serif;letter-spacing:0.000px;color:#000;transform:scaleX(0.8918);transform-origin:0 0;">KONNEXIS INC</div><div class="t" style="left:530.60px;top:321.59px;font:normal normal 12px/16px 'Liberation Sans', sans-serif;letter-spacing:0.000px;color:#000;transform:scaleX(0.9232);transform-origin:0 0;">10.1</div><div class="t" style="left:830.60px;top:321.59px;font:normal normal 12px/16px 'Liberation Sans', sans-serif;letter-spacing:0.000px;color:#000;transform:scaleX(0.9056);transform-origin:0 0;">Test 01</div><div class="t" style="left:50.60px;top:343.59px;font:normal normal 12px/16px 'Liberation Sans', sans-serif;letter-spacing:0.000px;color:#000;transform:scaleX(0.9055);transform-origin:0 0;">301180</div><div class="t" style="left:130.60px;top:343.59px;font:normal normal 12px/16px 'Liberation Sans', sans-serif;letter-spacing:0.000px;color:#000;transform:scaleX(0.9120);transform-origin:0 0;">3STG</div><div class="t" style="left:230.60px;top:343.59px;font:normal normal 12px/16px 'Liberation Sans', sans-serif;letter-spacing:0.000px;color:#000;transform:scaleX(0.8918);transform-origin:0 0;">KONNEXIS INC</div><div class="t" style="left:530.60px;top:343.59px;font:normal normal 12px/16px 'Liberation Sans', sans-serif;letter-spacing:0.000px;color:#000;transform:scaleX(0.9244);transform-origin:0 0;">11.0</div><div class="t" style="left:830.60px;top:343.59px;font:normal normal 12px/16px 'Liberation Sans', sans-serif;letter-spacing:0.000px;color:#000;transform:scaleX(0.9116);transform-origin:0 0;">Test 3</div><div class="t" style="left:50.60px;top:365.59px;font:normal normal 12px/16px 'Liberation Sans', sans-serif;letter-spacing:0.000px;color:#000;transform:scaleX(0.9055);transform-origin:0 0;">301179</div><div class="t" style="left:130.60px;top:365.59px;font:normal normal 12px/16px 'Liberation Sans', sans-serif;letter-spacing:0.000px;color:#000;transform:scaleX(0.9003);transform-origin:0 0;">3 STAGE</div><div class="t" style="left:230.60px;top:365.59px;font:normal normal 12px/16px 'Liberation Sans', sans-serif;letter-spacing:0.000px;color:#000;transform:scaleX(0.8918);transform-origin:0 0;">KONNEXIS INC</div><div class="t" style="left:530.60px;top:365.59px;font:normal normal 12px/16px 'Liberation Sans', sans-serif;letter-spacing:0.000px;color:#000;transform:scaleX(0.9232);transform-origin:0 0;">10.1</div><div class="t" style="left:830.60px;top:365.59px;font:normal normal 12px/16px 'Liberation Sans', sans-serif;letter-spacing:0.000px;color:#000;transform:scaleX(0.9257);transform-origin:0 0;">Test</div><div class="t" style="left:50.60px;top:387.59px;font:normal normal 12px/16px 'Liberation Sans', sans-serif;letter-spacing:0.000px;color:#000;transform:scaleX(0.9055);transform-origin:0 0;">301178</div><div class="t" style="left:130.60px;top:387.59px;font:normal normal 12px/16px 'Liberation Sans', sans-serif;letter-spacing:0.000px;color:#000;transform:scaleX(0.8977);transform-origin:0 0;">PR-VP-AE</div><div class="t" style="left:230.60px;top:387.59px;font:normal normal 12px/16px 'Liberation Sans', sans-serif;letter-spacing:0.000px;color:#000;transform:scaleX(0.8918);transform-origin:0 0;">KONNEXIS INC</div><div class="t" style="left:530.60px;top:387.59px;font:normal normal 12px/16px 'Liberation Sans', sans-serif;letter-spacing:0.000px;color:#000;transform:scaleX(0.9232);transform-origin:0 0;">10.1</div><div class="t" style="left:830.60px;top:387.59px;font:normal normal 12px/16px 'Liberation Sans', sans-serif;letter-spacing:0.000px;color:#000;transform:scaleX(0.8846);transform-origin:0 0;">Preconditioning, Vessel Processing, an...</div><div class="t" style="left:50.60px;top:409.59px;font:normal normal 12px/16px 'Liberation Sans', sans-serif;letter-spacing:0.000px;color:#000;transform:scaleX(0.9055);transform-origin:0 0;">301176</div><div class="t" style="left:130.60px;top:409.59px;font:normal normal 12px/16px 'Liberation Sans', sans-serif;letter-spacing:0.000px;color:#000;transform:scaleX(0.9085);transform-origin:0 0;">Test01</div><div class="t" style="left:230.60px;top:409.59px;font:normal normal 12px/16px 'Liberation Sans', sans-serif;letter-spacing:0.000px;color:#000;transform:scaleX(0.8918);transform-origin:0 0;">KONNEXIS INC</div><div class="t" style="left:530.60px;top:409.59px;font:normal normal 12px/16px 'Liberation Sans', sans-serif;letter-spacing:0.000px;color:#000;transform:scaleX(0.9399);transform-origin:0 0;">1.0</div><div class="t" style="left:830.60px;top:409.59px;font:normal normal 12px/16px 'Liberation Sans', sans-serif;letter-spacing:0.000px;color:#000;transform:scaleX(0.9009);transform-origin:0 0;">Test load</div><div class="t" style="left:50.60px;top:431.59px;font:normal normal 12px/16px 'Liberation Sans', sans-serif;letter-spacing:0.000px;color:#000;transform:scaleX(0.9055);transform-origin:0 0;">301174</div><div class="t" style="left:230.60px;top:431.59px;font:normal normal 12px/16px 'Liberation Sans', sans-serif;letter-spacing:0.000px;color:#000;transform:scaleX(0.8905);transform-origin:0 0;">Sample Customer</div><div class="t" style="left:530.60px;top:431.59px;font:normal normal 12px/16px 'Liberation Sans', sans-serif;letter-spacing:0.000px;color:#000;transform:scaleX(0.9232);transform-origin:0 0;">15.0</div><div class="t" style="left:630.60px;top:431.59px;font:normal normal 12px/16px 'Liberation Sans', sans-serif;letter-spacing:0.000px;color:#000;transform:scaleX(0.8903);transform-origin:0 0;">Steam Cond Loop</div><div class="t" style="left:50.60px;top:453.59px;font:normal normal 12px/16px 'Liberation Sans', sans-serif;letter-spacing:0.000px;color:#000;transform:scaleX(0.9055);transform-origin:0 0;">301173</div><div class="t" style="left:230.60px;top:453.59px;font:normal normal 12px/16px 'Liberation Sans', sans-serif;letter-spacing:0.000px;color:#000;transform:scaleX(0.8905);transform-origin:0 0;">Sample Customer</div><div class="t" style="left:530.60px;top:453.59px;font:normal normal 12px/16px 'Liberation Sans', sans-serif;letter-spacing:0.000px;color:#000;transform:scaleX(0.9232);transform-origin:0 0;">13.2</div><div class="t" style="left:630.60px;top:453.59px;font:normal normal 12px/16px 'Liberation Sans', sans-serif;letter-spacing:0.000px;color:#000;transform:scaleX(0.8929);transform-origin:0 0;">Load A - F.A.T.</div><div class="t" style="left:50.60px;top:475.59px;font:normal normal 12px/16px 'Liberation Sans', sans-serif;letter-spacing:0.000px;color:#000;transform:scaleX(0.9055);transform-origin:0 0;">301172</div><div class="t" style="left:230.60px;top:475.59px;font:normal normal 12px/16px 'Liberation Sans', sans-serif;letter-spacing:0.000px;color:#000;transform:scaleX(0.8905);transform-origin:0 0;">Sample Customer</div><div class="t" style="left:530.60px;top:475.59px;font:normal normal 12px/16px 'Liberation Sans', sans-serif;letter-spacing:0.000px;color:#000;transform:scaleX(0.9232);transform-origin:0 0;">15.0</div><div class="t" style="left:630.60px;top:475.59px;font:normal normal 12px/16px 'Liberation Sans', sans-serif;letter-spacing:0.000px;color:#000;transform:scaleX(0.8903);transform-origin:0 0;">Steam Cond Loop</div><div class="t" style="left:50.60px;top:497.59px;font:normal normal 12px/16px 'Liberation Sans', sans-serif;letter-spacing:0.000px;color:#000;transform:scaleX(0.9055);transform-origin:0 0;">301171</div><div class="t" style="left:230.60px;top:497.59px;font:normal normal 12px/16px 'Liberation Sans', sans-serif;letter-spacing:0.000px;color:#000;transform:scaleX(0.8905);transform-origin:0 0;">Sample Customer</div><div class="t" style="left:530.60px;top:497.59px;font:normal normal 12px/16px 'Liberation Sans', sans-serif;letter-spacing:0.000px;color:#000;transform:scaleX(0.9232);transform-origin:0 0;">13.2</div><div class="t" style="left:630.60px;top:497.59px;font:normal normal 12px/16px 'Liberation Sans', sans-serif;letter-spacing:0.000px;color:#000;transform:scaleX(0.8929);transform-origin:0 0;">Load A - F.A.T.</div><div class="t" style="left:50.60px;top:519.59px;font:normal normal 12px/16px 'Liberation Sans', sans-serif;letter-spacing:0.000px;color:#000;transform:scaleX(0.9055);transform-origin:0 0;">301170</div><div class="t" style="left:230.60px;top:519.59px;font:normal normal 12px/16px 'Liberation Sans', sans-serif;letter-spacing:0.000px;color:#000;transform:scaleX(0.8905);transform-origin:0 0;">Sample Customer</div><div class="t" style="left:530.60px;top:519.59px;font:normal normal 12px/16px 'Liberation Sans', sans-serif;letter-spacing:0.000px;color:#000;transform:scaleX(0.9232);transform-origin:0 0;">13.1</div><div class="t" style="left:630.60px;top:519.59px;font:normal normal 12px/16px 'Liberation Sans', sans-serif;letter-spacing:0.000px;color:#000;transform:scaleX(0.8929);transform-origin:0 0;">Load A - F.A.T.</div><div class="t" style="left:50.60px;top:541.59px;font:normal normal 12px/16px 'Liberation Sans', sans-serif;letter-spacing:0.000px;color:#000;transform:scaleX(0.9055);transform-origin:0 0;">301169</div><div class="t" style="left:230.60px;top:541.59px;font:normal normal 12px/16px 'Liberation Sans', sans-serif;letter-spacing:0.000px;color:#000;transform:scaleX(0.8905);transform-origin:0 0;">Sample Customer</div><div class="t" style="left:530.60px;top:541.59px;font:normal normal 12px/16px 'Liberation Sans', sans-serif;letter-spacing:0.000px;color:#000;transform:scaleX(0.9232);transform-origin:0 0;">15.0</div><div class="t" style="left:630.60px;top:541.59px;font:normal normal 12px/16px 'Liberation Sans', sans-serif;letter-spacing:0.000px;color:#000;transform:scaleX(0.8903);transform-origin:0 0;">Steam Cond Loop</div><div class="t" style="left:50.60px;top:563.59px;font:normal normal 12px/16px 'Liberation Sans', sans-serif;letter-spacing:0.000px;color:#000;transform:scaleX(0.9055);transform-origin:0 0;">301168</div><div class="t" style="left:230.60px;top:563.59px;font:normal normal 12px/16px 'Liberation Sans', sans-serif;letter-spacing:0.000px;color:#000;transform:scaleX(0.8905);transform-origin:0 0;">Sample Customer</div><div class="t" style="left:530.60px;top:563.59px;font:normal normal 12px/16px 'Liberation Sans', sans-serif;letter-spacing:0.000px;color:#000;transform:scaleX(0.9232);transform-origin:0 0;">15.0</div><div class="t" style="left:630.60px;top:563.59px;font:normal normal 12px/16px 'Liberation Sans', sans-serif;letter-spacing:0.000px;color:#000;transform:scaleX(0.8903);transform-origin:0 0;">Steam Cond Loop</div><div class="t" style="left:830.60px;top:563.59px;font:normal normal 12px/16px 'Liberation Sans', sans-serif;letter-spacing:0.000px;color:#000;transform:scaleX(0.8855);transform-origin:0 0;">FAT - test steam conditioning loop</div><div class="t" style="left:50.60px;top:585.59px;font:normal normal 12px/16px 'Liberation Sans', sans-serif;letter-spacing:0.000px;color:#000;transform:scaleX(0.9055);transform-origin:0 0;">301164</div><div class="t" style="left:130.60px;top:585.59px;font:normal normal 12px/16px 'Liberation Sans', sans-serif;letter-spacing:0.000px;color:#000;transform:scaleX(0.8921);transform-origin:0 0;">Phase Start Int.</div><div class="t" style="left:230.60px;top:585.59px;font:normal normal 12px/16px 'Liberation Sans', sans-serif;letter-spacing:0.000px;color:#000;transform:scaleX(0.8905);transform-origin:0 0;">Sample Customer</div><div class="t" style="left:530.60px;top:585.59px;font:normal normal 12px/16px 'Liberation Sans', sans-serif;letter-spacing:0.000px;color:#000;transform:scaleX(0.9232);transform-origin:0 0;">14.1</div><div class="t" style="left:630.60px;top:585.59px;font:normal normal 12px/16px 'Liberation Sans', sans-serif;letter-spacing:0.000px;color:#000;transform:scaleX(0.8897);transform-origin:0 0;">Start Phase Interl...</div><div class="t" style="left:830.60px;top:585.59px;font:normal normal 12px/16px 'Liberation Sans', sans-serif;letter-spacing:0.000px;color:#000;transform:scaleX(0.8860);transform-origin:0 0;">FAT - test phase start interlocks</div><div class="t" style="left:50.60px;top:607.59px;font:normal normal 12px/16px 'Liberation Sans', sans-serif;letter-spacing:0.000px;color:#000;transform:scaleX(0.9055);transform-origin:0 0;">301163</div><div class="t" style="left:130.60px;top:607.59px;font:normal normal 12px/16px 'Liberation Sans', sans-serif;letter-spacing:0.000px;color:#000;transform:scaleX(0.8921);transform-origin:0 0;">Phase Start Int.</div><div class="t" style="left:230.60px;top:607.59px;font:normal normal 12px/16px 'Liberation Sans', sans-serif;letter-spacing:0.000px;color:#000;transform:scaleX(0.8905);transform-origin:0 0;">Sample Customer</div><div class="t" style="left:530.60px;top:607.59px;font:normal normal 12px/16px 'Liberation Sans', sans-serif;letter-spacing:0.000px;color:#000;transform:scaleX(0.9232);transform-origin:0 0;">14.0</div><div class="t" style="left:630.60px;top:607.59px;font:normal normal 12px/16px 'Liberation Sans', sans-serif;letter-spacing:0.000px;color:#000;transform:scaleX(0.8897);transform-origin:0 0;">Start Phase Interl...</div><div class="t" style="left:830.60px;top:607.59px;font:normal normal 12px/16px 'Liberation Sans', sans-serif;letter-spacing:0.000px;color:#000;transform:scaleX(0.8860);transform-origin:0 0;">FAT - test phase start interlocks</div><div class="t" style="left:50.60px;top:629.59px;font:normal normal 12px/16px 'Liberation Sans', sans-serif;letter-spacing:0.000px;color:#000;transform:scaleX(0.9055);transform-origin:0 0;">301162</div><div class="t" style="left:230.60px;top:629.59px;font:normal normal 12px/16px 'Liberation Sans', sans-serif;letter-spacing:0.000px;color:#000;transform:scaleX(0.8905);transform-origin:0 0;">Sample Customer</div><div class="t" style="left:530.60px;top:629.59px;font:normal normal 12px/16px 'Liberation Sans', sans-serif;letter-spacing:0.000px;color:#000;transform:scaleX(0.9232);transform-origin:0 0;">13.0</div><div class="t" style="left:630.60px;top:629.59px;font:normal normal 12px/16px 'Liberation Sans', sans-serif;letter-spacing:0.000px;color:#000;transform:scaleX(0.8929);transform-origin:0 0;">Load A - F.A.T.</div><div class="t" style="left:50.60px;top:651.59px;font:normal normal 12px/16px 'Liberation Sans', sans-serif;letter-spacing:0.000px;color:#000;transform:scaleX(0.9055);transform-origin:0 0;">301161</div><div class="t" style="left:130.60px;top:651.59px;font:normal normal 12px/16px 'Liberation Sans', sans-serif;letter-spacing:0.000px;color:#000;transform:scaleX(0.9063);transform-origin:0 0;">Load B</div><div class="t" style="left:230.60px;top:651.59px;font:normal normal 12px/16px 'Liberation Sans', sans-serif;letter-spacing:0.000px;color:#000;transform:scaleX(0.8905);transform-origin:0 0;">Sample Customer</div><div class="t" style="left:530.60px;top:651.59px;font:normal normal 12px/16px 'Liberation Sans', sans-serif;letter-spacing:0.000px;color:#000;transform:scaleX(0.9145);transform-origin:0 0;">11.16</div><div class="t" style="left:630.60px;top:651.59px;font:normal normal 12px/16px 'Liberation Sans', sans-serif;letter-spacing:0.000px;color:#000;transform:scaleX(0.8929);transform-origin:0 0;">Load A - F.A.T.</div><div class="t" style="left:830.60px;top:651.59px;font:normal normal 12px/16px 'Liberation Sans', sans-serif;letter-spacing:0.000px;color:#000;transform:scaleX(0.8928);transform-origin:0 0;">Load B - F.A.T.</div><div class="t" style="left:1030.60px;top:651.59px;font:normal normal 12px/16px 'Liberation Sans', sans-serif;letter-spacing:0.000px;color:#000;transform:scaleX(0.8964);transform-origin:0 0;">Load B test</div><div class="t" style="left:50.60px;top:673.59px;font:normal normal 12px/16px 'Liberation Sans', sans-serif;letter-spacing:0.000px;color:#000;transform:scaleX(0.9055);transform-origin:0 0;">301160</div><div class="t" style="left:230.60px;top:673.59px;font:normal normal 12px/16px 'Liberation Sans', sans-serif;letter-spacing:0.000px;color:#000;transform:scaleX(0.8905);transform-origin:0 0;">Sample Customer</div><div class="t" style="left:530.60px;top:673.59px;font:normal normal 12px/16px 'Liberation Sans', sans-serif;letter-spacing:0.000px;color:#000;transform:scaleX(0.9145);transform-origin:0 0;">11.15</div><div class="t" style="left:630.60px;top:673.59px;font:normal normal 12px/16px 'Liberation Sans', sans-serif;letter-spacing:0.000px;color:#000;transform:scaleX(0.8929);transform-origin:0 0;">Load A - F.A.T.</div><div class="t" style="left:10.00px;top:714.71px;font:normal normal 11px/15px 'Liberation Sans', sans-serif;letter-spacing:0.172px;color:#000;">Items: 82</div>
<svg style="position:absolute;left:220px;top:38px" width="90" height="50"><ellipse cx="44.2" cy="25" rx="37.1" ry="19.5" fill="none" stroke="#ed1c24" stroke-width="3.2" shape-rendering="crispEdges"/></svg>
</body></html>
